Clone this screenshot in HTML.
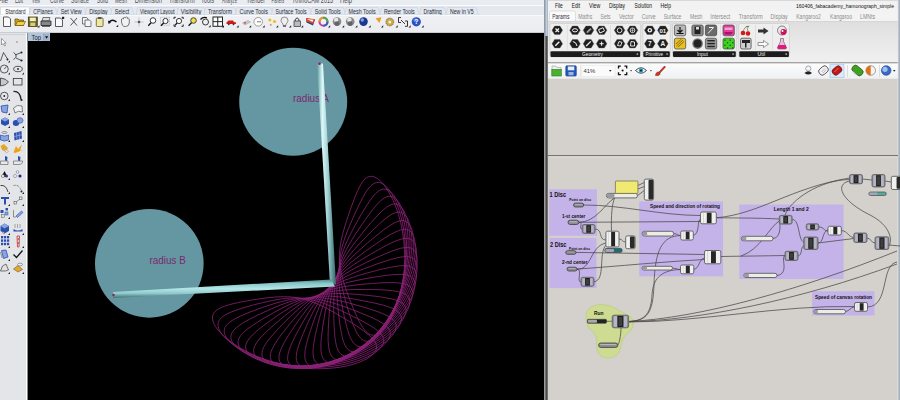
<!DOCTYPE html><html><head><meta charset="utf-8"><style>
html,body{margin:0;padding:0;width:900px;height:400px;overflow:hidden;background:#000}
svg{display:block}
text{font-family:"Liberation Sans",sans-serif}
</style></head><body>
<svg width="900" height="400" viewBox="0 0 900 400">
<defs>
<linearGradient id="rodV" x1="0" y1="0" x2="1" y2="0">
<stop offset="0" stop-color="#5a9a9e"/><stop offset="0.28" stop-color="#def8f8"/><stop offset="0.55" stop-color="#a4d4d6"/><stop offset="0.82" stop-color="#5e9296"/><stop offset="1" stop-color="#3c666a"/></linearGradient>
<linearGradient id="rodH" x1="0" y1="0" x2="0" y2="1">
<stop offset="0" stop-color="#4e8a8f"/><stop offset="0.2" stop-color="#86c4c6"/><stop offset="0.5" stop-color="#b4e6e6"/><stop offset="0.75" stop-color="#90cacc"/><stop offset="1" stop-color="#406f74"/></linearGradient>
<linearGradient id="rhTb" x1="0" y1="0" x2="0" y2="1"><stop offset="0" stop-color="#f5f5f8"/><stop offset="1" stop-color="#ebecf0"/></linearGradient>
<linearGradient id="ghRib" x1="0" y1="0" x2="0" y2="1"><stop offset="0" stop-color="#dedede"/><stop offset="0.5" stop-color="#e8e8e8"/><stop offset="1" stop-color="#f0f0f0"/></linearGradient>
<linearGradient id="ghTb" x1="0" y1="0" x2="0" y2="1"><stop offset="0" stop-color="#fcfcfc"/><stop offset="1" stop-color="#eef0f3"/></linearGradient>
<linearGradient id="divB" x1="0" y1="0" x2="1" y2="0"><stop offset="0" stop-color="#8a9aac"/><stop offset="0.5" stop-color="#c4d2e0"/><stop offset="1" stop-color="#8a9aac"/></linearGradient>
</defs>

<rect x="0" y="0" width="544" height="33" fill="url(#rhTb)"/>
<rect x="0" y="0" width="544" height="5" fill="#e9ecf1"/>
<rect x="0" y="5" width="544" height="1" fill="#fafbfd"/>
<rect x="0" y="6" width="544" height="9" fill="#e4e8ef"/>
<g font-size="8.2" fill="#4e4e56">
<text x="-2" y="3.4" textLength="10.0" lengthAdjust="spacingAndGlyphs">File</text>
<text x="15" y="3.4" textLength="8.0" lengthAdjust="spacingAndGlyphs">Edit</text>
<text x="32" y="3.4" textLength="8.0" lengthAdjust="spacingAndGlyphs">View</text>
<text x="50" y="3.4" textLength="14.0" lengthAdjust="spacingAndGlyphs">Curve</text>
<text x="71" y="3.4" textLength="18.0" lengthAdjust="spacingAndGlyphs">Surface</text>
<text x="97" y="3.4" textLength="11.0" lengthAdjust="spacingAndGlyphs">Solid</text>
<text x="115" y="3.4" textLength="12.0" lengthAdjust="spacingAndGlyphs">Mesh</text>
<text x="134.7" y="3.4" textLength="27.3" lengthAdjust="spacingAndGlyphs">Dimension</text>
<text x="169" y="3.4" textLength="25.7" lengthAdjust="spacingAndGlyphs">Transform</text>
<text x="201" y="3.4" textLength="13.0" lengthAdjust="spacingAndGlyphs">Tools</text>
<text x="222" y="3.4" textLength="15.0" lengthAdjust="spacingAndGlyphs">Analyze</text>
<text x="247.5" y="3.4" textLength="17.5" lengthAdjust="spacingAndGlyphs">Render</text>
<text x="271.5" y="3.4" textLength="12.5" lengthAdjust="spacingAndGlyphs">Panels</text>
<text x="293" y="3.4" textLength="40.0" lengthAdjust="spacingAndGlyphs">RhinoCAM 2015</text>
<text x="340" y="3.4" textLength="12.0" lengthAdjust="spacingAndGlyphs">Help</text>
</g>
<path d="M0.5 15 L0.5 8 Q0.5 7 1.5 7 L28.5 7 Q29.5 7 29.5 8 L29.5 15 Z" fill="#fdfdfe" stroke="#c9ced8" stroke-width="0.6"/>
<path d="M29.299999999999997 15 L30.799999999999997 7.5 L55.3 7.5 L57.8 15 Z" fill="#e2e7f0" stroke="#c3c9d6" stroke-width="0.5"/>
<path d="M56.7 15 L58.2 7.5 L84.2 7.5 L86.7 15 Z" fill="#e2e7f0" stroke="#c3c9d6" stroke-width="0.5"/>
<path d="M85.2 15 L86.7 7.5 L110.1 7.5 L112.6 15 Z" fill="#e2e7f0" stroke="#c3c9d6" stroke-width="0.5"/>
<path d="M110.7 15 L112.2 7.5 L131.7 7.5 L134.2 15 Z" fill="#e2e7f0" stroke="#c3c9d6" stroke-width="0.5"/>
<path d="M136 15 L137.5 7.5 L177.2 7.5 L179.7 15 Z" fill="#e2e7f0" stroke="#c3c9d6" stroke-width="0.5"/>
<path d="M176.8 15 L178.3 7.5 L203.8 7.5 L206.3 15 Z" fill="#e2e7f0" stroke="#c3c9d6" stroke-width="0.5"/>
<path d="M204 15 L205.5 7.5 L234.5 7.5 L237 15 Z" fill="#e2e7f0" stroke="#c3c9d6" stroke-width="0.5"/>
<path d="M235.5 15 L237.0 7.5 L270.5 7.5 L273 15 Z" fill="#e2e7f0" stroke="#c3c9d6" stroke-width="0.5"/>
<path d="M271.5 15 L273.0 7.5 L309.2 7.5 L311.7 15 Z" fill="#e2e7f0" stroke="#c3c9d6" stroke-width="0.5"/>
<path d="M310.7 15 L312.2 7.5 L343.3 7.5 L345.8 15 Z" fill="#e2e7f0" stroke="#c3c9d6" stroke-width="0.5"/>
<path d="M344.6 15 L346.1 7.5 L378.1 7.5 L380.6 15 Z" fill="#e2e7f0" stroke="#c3c9d6" stroke-width="0.5"/>
<path d="M379.9 15 L381.4 7.5 L417.2 7.5 L419.7 15 Z" fill="#e2e7f0" stroke="#c3c9d6" stroke-width="0.5"/>
<path d="M419.6 15 L421.1 7.5 L444.2 7.5 L446.7 15 Z" fill="#e2e7f0" stroke="#c3c9d6" stroke-width="0.5"/>
<path d="M446 15 L447.5 7.5 L476.1 7.5 L478.6 15 Z" fill="#e2e7f0" stroke="#c3c9d6" stroke-width="0.5"/>
<g font-size="6.4" fill="#2a2e38">
<text x="5.2" y="13.5" textLength="20.3" lengthAdjust="spacingAndGlyphs">Standard</text>
<text x="33.3" y="13.5" textLength="19.5" lengthAdjust="spacingAndGlyphs">CPlanes</text>
<text x="60.7" y="13.5" textLength="21.0" lengthAdjust="spacingAndGlyphs">Set View</text>
<text x="89.2" y="13.5" textLength="18.4" lengthAdjust="spacingAndGlyphs">Display</text>
<text x="114.7" y="13.5" textLength="14.5" lengthAdjust="spacingAndGlyphs">Select</text>
<text x="140" y="13.5" textLength="34.7" lengthAdjust="spacingAndGlyphs">Viewport Layout</text>
<text x="180.8" y="13.5" textLength="20.5" lengthAdjust="spacingAndGlyphs">Visibility</text>
<text x="208" y="13.5" textLength="24.0" lengthAdjust="spacingAndGlyphs">Transform</text>
<text x="239.5" y="13.5" textLength="28.5" lengthAdjust="spacingAndGlyphs">Curve Tools</text>
<text x="275.5" y="13.5" textLength="31.2" lengthAdjust="spacingAndGlyphs">Surface Tools</text>
<text x="314.7" y="13.5" textLength="26.1" lengthAdjust="spacingAndGlyphs">Solid Tools</text>
<text x="348.6" y="13.5" textLength="27.0" lengthAdjust="spacingAndGlyphs">Mesh Tools</text>
<text x="383.9" y="13.5" textLength="30.8" lengthAdjust="spacingAndGlyphs">Render Tools</text>
<text x="423.6" y="13.5" textLength="18.1" lengthAdjust="spacingAndGlyphs">Drafting</text>
<text x="450" y="13.5" textLength="23.6" lengthAdjust="spacingAndGlyphs">New in V5</text>
</g>
<rect x="0" y="15" width="544" height="1" fill="#f8f9fb"/>
<path d="M3.5 17 L8.5 17 L10.5 19 L10.5 26.5 L3.5 26.5 Z" fill="#fafafa" stroke="#333" stroke-width="0.8"/>
<path d="M15 19 L18 19 L19 20 L23.5 20 L23.5 25.5 L15 25.5 Z" fill="#c8a020" stroke="#5a4a10" stroke-width="0.7"/>
<path d="M15.5 25.5 L17.5 21.5 L25.5 21.5 L23.5 25.5 Z" fill="#f0d040" stroke="#5a4a10" stroke-width="0.6"/>
<rect x="28.3" y="17" width="9" height="9.5" fill="#6a6420" stroke="#3a3410" stroke-width="0.7"/>
<rect x="29.8" y="17.6" width="6" height="3.6" fill="#f4f0c0"/>
<rect x="30.3" y="22.6" width="5" height="3.4" fill="#d8d080"/>
<path d="M37.3 27.5 L39.5 27.5 L39.5 25.3 Z" fill="#222"/>
<path d="M43 17.5 L50 17.5 L49 21 L42 21 Z" fill="#ddd" stroke="#444" stroke-width="0.7"/>
<path d="M41 21 L51 21 L51 25.5 L41 25.5 Z" fill="#888" stroke="#222" stroke-width="0.8"/>
<rect x="42" y="25.5" width="8" height="1.2" fill="#333"/>
<path d="M55.5 18 L60.5 18 L62.5 20 L62.5 26.5 L55.5 26.5 Z" fill="#fafafa" stroke="#333" stroke-width="0.8"/>
<rect x="62" y="16.8" width="2.2" height="2.2" fill="#222"/>
<path d="M70.5 18 L77 25.5 M77 18 L70.5 25.5" stroke="#555" stroke-width="1"/>
<path d="M82.5 17.5 L86.5 17.5 L88 19 L88 24 L82.5 24 Z" fill="#f4f4f4" stroke="#444" stroke-width="0.7"/>
<path d="M85 20 L89.5 20 L91 21.5 L91 26.5 L85 26.5 Z" fill="#f4f4f4" stroke="#444" stroke-width="0.7"/>
<rect x="96.3" y="18" width="6.8" height="8.5" rx="0.8" fill="#f0e8a0" stroke="#4a4420" stroke-width="0.7"/>
<rect x="98" y="17" width="3.5" height="2" fill="#555"/>
<path d="M109 22 Q112.5 18.5 116.5 22" fill="none" stroke="#111" stroke-width="1.4"/>
<path d="M108 20.5 L111 22.5 L108.5 24 Z" fill="#111"/>
<path d="M116 27 L118.2 27 L118.2 24.8 Z" fill="#222"/>
<path d="M121.5 22 L121.5 19 Q122.5 18 123.5 19 L123.5 17.8 Q124.5 16.8 125.5 17.8 L125.5 17.5 Q126.5 16.5 127.5 17.5 L127.5 18.5 Q128.8 18 129.3 19 L129.3 23 Q129 26.5 125.5 26.5 L124 26.5 Q122 26 121.5 22 Z" fill="#f2f2f2" stroke="#555" stroke-width="0.8"/>
<path d="M139 17.5 L139 26.5 M134.5 22 L143.5 22" stroke="#bbb" stroke-width="0.9"/>
<circle cx="139" cy="22" r="1.3" fill="#555"/>
<circle cx="153" cy="20.5" r="2.8" fill="#fff" stroke="#222" stroke-width="0.9"/>
<path d="M151 22.8 L148.3 25.8" stroke="#111" stroke-width="1.3"/>
<rect x="160.5" y="17.3" width="9" height="8" fill="none" stroke="#999" stroke-width="0.6" stroke-dasharray="1 0.8"/>
<circle cx="165.5" cy="21" r="2.6" fill="#fff" stroke="#222" stroke-width="0.9"/>
<path d="M163.6 23 L161 25.8" stroke="#111" stroke-width="1.3"/>
<path d="M174 19 L174 17.3 L175.8 17.3 M181.5 17.3 L183.2 17.3 L183.2 19 M183.2 24.5 L183.2 26.3 L181.5 26.3 M175.8 26.3 L174 26.3 L174 24.5" fill="none" stroke="#222" stroke-width="1"/>
<circle cx="179" cy="21" r="2.6" fill="#fff" stroke="#222" stroke-width="0.9"/>
<path d="M177 23 L175 25.3" stroke="#111" stroke-width="1.2"/>
<circle cx="193.5" cy="20.5" r="2.8" fill="#f0e040" stroke="#333" stroke-width="0.9"/>
<path d="M191.5 22.8 L188.6 25.8" stroke="#111" stroke-width="1.3"/>
<circle cx="205.5" cy="22" r="3" fill="none" stroke="#222" stroke-width="0.9"/>
<path d="M200.5 19.5 Q203 16.5 207 17.8" fill="none" stroke="#111" stroke-width="1.3"/>
<path d="M208.5 27.3 L210.7 27.3 L210.7 25.1 Z" fill="#222"/>
<rect x="213" y="17" width="9.5" height="9.3" fill="#fff" stroke="#222" stroke-width="1"/>
<path d="M217.75 17 L217.75 26.3 M213 21.65 L222.5 21.65" stroke="#222" stroke-width="1"/>
<path d="M221.8 27.5 L224.0 27.5 L224.0 25.3 Z" fill="#222"/>
<path d="M226.5 22.5 L228.5 20.5 L233 20.5 L234 22 L236 22.5 L236 24 L226.5 24 Z" fill="#d21a1a"/>
<circle cx="228.8" cy="24.3" r="0.9" fill="#333"/><circle cx="233.5" cy="24.3" r="0.9" fill="#333"/>
<path d="M236.5 27.5 L238.7 27.5 L238.7 25.3 Z" fill="#222"/>
<path d="M242.5 23 L248 20.5 L250.5 22 L245 25 Z" fill="#ccc" stroke="#999" stroke-width="0.5"/>
<circle cx="245" cy="22.8" r="0.9" fill="#c33"/>
<path d="M249 27.5 L251.2 27.5 L251.2 25.3 Z" fill="#222"/>
<circle cx="258.2" cy="21.8" r="4.3" fill="#fff" stroke="#888" stroke-width="0.8"/>
<path d="M257 21.8 L261 21.8" stroke="#555" stroke-width="0.8"/>
<path d="M262.5 27.5 L264.7 27.5 L264.7 25.3 Z" fill="#222"/>
<circle cx="269.8" cy="20" r="1.5" fill="#e8c020"/><circle cx="274.5" cy="21.5" r="1.6" fill="#e8c020"/><circle cx="270.8" cy="24.8" r="1.1" fill="#d9a080"/>
<path d="M276 27.5 L278.2 27.5 L278.2 25.3 Z" fill="#222"/>
<path d="M284.5 17 Q288 17 288 20.5 Q288 22.5 286 24 L286 25.5 L283 25.5 L283 24 Q281 22.5 281 20.5 Q281 17 284.5 17 Z" fill="#eee" stroke="#666" stroke-width="0.7"/>
<rect x="283" y="25.5" width="3" height="1.3" fill="#555"/>
<path d="M289 27.5 L291.2 27.5 L291.2 25.3 Z" fill="#222"/>
<path d="M295.3 21 L295.3 19.3 Q297.1 16.5 298.9 19.3 L298.9 21" fill="none" stroke="#222" stroke-width="0.9"/>
<rect x="294" y="21" width="6.5" height="5.5" fill="#bbb" stroke="#333" stroke-width="0.7"/>
<path d="M301 27.5 L303.2 27.5 L303.2 25.3 Z" fill="#222"/>
<path d="M306 18.5 L315 19.5 L313 25.5 L306.5 22.5 Z" fill="#1d3f9a"/>
<path d="M306 18 L315 19.2 L313.2 24 L306.3 21.2 Z" fill="#e04818"/>
<path d="M306.8 19 L313.5 19.8 L312.5 22 Z" fill="#f4f4f4"/>
<circle cx="323.5" cy="21.8" r="4" fill="none" stroke="#c040a0" stroke-width="2"/>
<path d="M319.5 21.8 A4 4 0 0 1 323.5 17.8" fill="none" stroke="#e0a020" stroke-width="2"/>
<path d="M323.5 17.8 A4 4 0 0 1 327.5 21.8" fill="none" stroke="#40b040" stroke-width="2"/>
<path d="M327.5 21.8 A4 4 0 0 1 323.5 25.8" fill="none" stroke="#3060c0" stroke-width="2"/>
<path d="M328 27.5 L330.2 27.5 L330.2 25.3 Z" fill="#222"/>
<circle cx="337" cy="21.6" r="4.3" fill="#8a8a8a"/><circle cx="336.2" cy="20" r="2.2" fill="#e8e8e8"/><circle cx="337" cy="23.5" r="2.4" fill="#444" opacity="0.55"/>
<path d="M342 27.5 L344.2 27.5 L344.2 25.3 Z" fill="#222"/>
<circle cx="350.2" cy="21.6" r="4.3" fill="#8a8a8a"/><circle cx="349.4" cy="20" r="2.2" fill="#e8e8e8"/><circle cx="350.2" cy="23.5" r="2.4" fill="#444" opacity="0.55"/>
<path d="M355.2 27.5 L357.4 27.5 L357.4 25.3 Z" fill="#222"/>
<circle cx="363.5" cy="21.6" r="4.3" fill="#1a3890"/><circle cx="362.3" cy="20" r="1.8" fill="#7ea0e0"/>
<path d="M368.5 27.5 L370.7 27.5 L370.7 25.3 Z" fill="#222"/>
<path d="M375.5 18.2 L381.5 17.3 L379.5 23 Z" fill="#e8a020"/>
<path d="M381 27.5 L383.2 27.5 L383.2 25.3 Z" fill="#222"/>
<circle cx="389.8" cy="22" r="4" fill="#c8a840" stroke="#555" stroke-width="0.6" stroke-dasharray="1.2 0.8"/>
<circle cx="389.8" cy="22" r="1.5" fill="#f0f0f0"/>
<path d="M395.5 27.5 L397.7 27.5 L397.7 25.3 Z" fill="#222"/>
<path d="M401 17.5 L398.5 17.5 L398.5 22.5 L401 22.5 M405 21 L407.5 21 L407.5 26.3 L405 26.3 M401 20 L405 24" fill="none" stroke="#222" stroke-width="0.9"/>
<path d="M408.5 27.5 L410.7 27.5 L410.7 25.3 Z" fill="#222"/>
<circle cx="416.3" cy="21.8" r="4.6" fill="#2a52c0"/><circle cx="415.3" cy="20.3" r="2" fill="#6a90e8" opacity="0.7"/>
<text x="414.3" y="24.3" font-size="7" font-weight="bold" fill="#fff">?</text>
<path d="M421.5 27.5 L423.7 27.5 L423.7 25.3 Z" fill="#222"/>
<rect x="0" y="32" width="544" height="1" fill="#c8ccd4"/>
<rect x="0" y="33" width="26" height="367" fill="#e4e5e9"/>
<path d="M1.5 38.5 L1.5 45 L3 43.5 L4.5 46 L5.5 45.5 L4.3 43 L6.2 43 Z" fill="#fff" stroke="#666" stroke-width="0.6"/>
<circle cx="17" cy="42" r="1" fill="#aaa"/>
<path d="M0.5 61 L3.5 52.5 L7.5 59" fill="none" stroke="#333" stroke-width="0.8"/>
<circle cx="7.5" cy="59.5" r="1" fill="#222"/><path d="M8 62.5 L10 62.5 L10 60.5 Z" fill="#222"/>
<path d="M13.5 52.5 Q19 56 13.5 59.5 M15 55 L21.5 52.5 M16 58 L21.5 60.5" fill="none" stroke="#333" stroke-width="0.8"/>
<circle cx="21.5" cy="52.5" r="1" fill="#222"/><circle cx="21.5" cy="60.5" r="1.1" fill="#222"/>
<circle cx="4.3" cy="69" r="4" fill="none" stroke="#333" stroke-width="0.8"/><path d="M4.3 69 L6.5 66.5" stroke="#333" stroke-width="0.8"/><path d="M8 74.5 L10 74.5 L10 72.5 Z" fill="#222"/>
<ellipse cx="18" cy="69" rx="4.3" ry="2.7" fill="none" stroke="#333" stroke-width="0.8"/><circle cx="18" cy="69" r="0.9" fill="#222"/><path d="M22 74.5 L24 74.5 L24 72.5 Z" fill="#222"/>
<path d="M0.5 78 Q6 78.5 8.5 82 Q6 85.5 0.5 86 Z" fill="#c8c8c8" stroke="#333" stroke-width="0.8"/>
<rect x="13.3" y="78.5" width="8.7" height="6.5" fill="none" stroke="#333" stroke-width="0.8"/>
<circle cx="4.3" cy="96" r="3.8" fill="none" stroke="#333" stroke-width="0.8"/><circle cx="4.3" cy="96" r="0.9" fill="#222"/><path d="M8 101 L10 101 L10 99 Z" fill="#222"/>
<path d="M13.5 91.5 Q20 91 21 99.5" fill="none" stroke="#222" stroke-width="1.3"/><circle cx="21.5" cy="100" r="1.1" fill="#222"/>
<path d="M1 106 L8 105 L7 113 L2 112 Z" fill="#8aa4e0" stroke="#2a4fb0" stroke-width="0.8"/><path d="M8 115 L10 115 L10 113 Z" fill="#222"/>
<path d="M13.5 108 Q17 104 22 106 L22.5 112 Q18 110 15 113 Z" fill="#f0f0f0" stroke="#555" stroke-width="0.7"/><path d="M22 115 L24 115 L24 113 Z" fill="#222"/>
<path d="M1 119.5 L5 117.5 L9 119.5 L9 124 L5 126 L1 124 Z" fill="#2a4fb0"/><path d="M1 119.5 L5 117.5 L9 119.5 L5 121.5 Z" fill="#8aa4e0"/><path d="M8 128 L10 128 L10 126 Z" fill="#222"/>
<ellipse cx="16" cy="123" rx="3.2" ry="3" fill="#2a4fb0"/><ellipse cx="20" cy="120.5" rx="3" ry="2.8" fill="#8aa4e0" stroke="#2a4fb0" stroke-width="0.6"/><path d="M22 128 L24 128 L24 126 Z" fill="#222"/>
<ellipse cx="4.5" cy="132.5" rx="2.5" ry="1" fill="none" stroke="#555" stroke-width="0.6"/><path d="M0.5 135 Q4.5 137 8.5 135 L8.5 140 Q4.5 142 0.5 140 Z" fill="#8aa4e0" stroke="#2a4fb0" stroke-width="0.7"/><path d="M8 142 L10 142 L10 140 Z" fill="#222"/>
<path d="M14 133 L21.5 131 L22 138.5 L14.5 140.5 Z" fill="#2a4fb0"/><path d="M16.5 132.3 L17 139.8 M19 131.6 L19.5 139.2 M14.2 136.5 L21.8 134.8" stroke="#c0d0f0" stroke-width="0.5"/><path d="M22 142 L24 142 L24 140 Z" fill="#222"/>
<path d="M0.5 146 L4 144 L8 148 L6 152 L2 150 Z" fill="#e8a820"/><path d="M3.5 148 L8.5 151.5 L6.5 153 Z" fill="#f4f4f4" stroke="#888" stroke-width="0.5"/>
<path d="M13.5 152.5 L16 146 L18 149 L22 144.5 L20 150.5 L23 150 L15 153 Z" fill="#f0a010"/>
<path d="M5 156 L7.5 157 L7 161 L5 160.5 Z" fill="#2a4fb0"/><path d="M0.5 161 L8 161 L8 164.5 L0.5 164.5 Z" fill="#e8e8e8" stroke="#555" stroke-width="0.6"/>
<path d="M18 156 L20.5 157 L20 161 L18 160.5 Z" fill="#2a4fb0"/><path d="M13.5 161 L22.5 161 Q23 164.5 18 164.5 L13.5 164.5 Z" fill="#e8e8e8" stroke="#555" stroke-width="0.6"/>
<path d="M1.5 177 L4.5 171 L7.5 177 Z" fill="#111"/><circle cx="3" cy="176" r="1.5" fill="#fff" stroke="#333" stroke-width="0.5"/><circle cx="6.5" cy="176" r="1.5" fill="#2a3aa0"/><path d="M8 180 L10 180 L10 178 Z" fill="#222"/>
<circle cx="17.5" cy="172" r="1.3" fill="#fff" stroke="#555" stroke-width="0.5"/><circle cx="15" cy="176" r="1.5" fill="#fff" stroke="#555" stroke-width="0.5"/><circle cx="20" cy="176" r="1.6" fill="#1a2a90"/>
<path d="M0.5 185.5 Q6 184.5 8 192" fill="none" stroke="#333" stroke-width="0.9"/><path d="M8 194 L10 194 L10 192 Z" fill="#222"/>
<path d="M13.5 185.5 Q19 184 21.5 191" fill="none" stroke="#555" stroke-width="0.9" stroke-dasharray="1 0.8"/><circle cx="21.5" cy="191.5" r="1" fill="#222"/><path d="M22 194 L24 194 L24 192 Z" fill="#222"/>
<path d="M1 197 L9 197 L9 199 L6 199 L6 204.5 L4 204.5 L4 199 L1 199 Z" fill="#2a4fb0"/><path d="M8 206 L10 206 L10 204 Z" fill="#222"/>
<rect x="14" y="201.5" width="2.5" height="2.5" fill="#eee" stroke="#555" stroke-width="0.6"/><rect x="19.5" y="197" width="2.5" height="2.5" fill="#eee" stroke="#555" stroke-width="0.6"/><path d="M16.5 201.5 L19.5 199.5" stroke="#555" stroke-width="0.6"/><path d="M22 206 L24 206 L24 204 Z" fill="#222"/>
<rect x="0.5" y="210" width="3" height="3" fill="#2a4fb0"/><rect x="5" y="212" width="3" height="3" fill="#8aa4e0" stroke="#2a4fb0" stroke-width="0.5"/><rect x="1.5" y="214.5" width="3" height="3" fill="#ddd" stroke="#555" stroke-width="0.5"/><rect x="5.5" y="208" width="2.5" height="2.5" fill="#2a4fb0"/><path d="M8 219 L10 219 L10 217 Z" fill="#222"/>
<path d="M13.5 210 L13.5 217 L16 217" fill="none" stroke="#777" stroke-width="0.8"/><path d="M16 216 L21.5 211 L23 212.5 L17.5 217.5 Z" fill="#8aa4e0" stroke="#2a4fb0" stroke-width="0.6"/>
<path d="M0.5 226 L4.5 223.5 L9 226 L9 231 L4.5 233.5 L0.5 231 Z" fill="#2a4fb0"/><path d="M0.5 226 L4.5 223.5 L9 226 L4.5 228.5 Z" fill="#8aa4e0"/><path d="M2 231 L5 233 L3.5 234 Z" fill="#fff" stroke="#333" stroke-width="0.4"/><path d="M8 235 L10 235 L10 233 Z" fill="#222"/>
<path d="M15 228 L15 224 M17.5 228 L17.5 224 M20 228 L20 224" stroke="#888" stroke-width="0.7"/><path d="M13.5 229 Q18 232 22.5 229 L22.5 231.5 L13.5 231.5 Z" fill="#2a4fb0"/><path d="M22 235 L24 235 L24 233 Z" fill="#222"/>
<g fill="#2a4fb0"><rect x="1" y="236.0" width="2.2" height="2.4"/><rect x="1" y="239.4" width="2.2" height="2.4"/><rect x="1" y="242.8" width="2.2" height="2.4"/><rect x="4" y="236.0" width="2.2" height="2.4"/><rect x="4" y="239.4" width="2.2" height="2.4"/><rect x="4" y="242.8" width="2.2" height="2.4"/><rect x="7" y="236.0" width="2.2" height="2.4"/><rect x="7" y="239.4" width="2.2" height="2.4"/><rect x="7" y="242.8" width="2.2" height="2.4"/></g><path d="M8 248 L10 248 L10 246 Z" fill="#222"/>
<path d="M17 236 L19.5 236 L19 247 L17.5 247 Z" fill="#e8e8e8" stroke="#c03030" stroke-width="0.8"/><circle cx="18.3" cy="239" r="0.8" fill="#c03030"/><circle cx="18.3" cy="243" r="0.8" fill="#c03030"/><path d="M22 248 L24 248 L24 246 Z" fill="#222"/>
<path d="M1.5 250.5 L6 250 L8 257 L3.5 258.5 Z" fill="#8aa4e0" stroke="#2a4fb0" stroke-width="0.8"/><path d="M0.5 252 L2 258" stroke="#555" stroke-width="0.6"/><path d="M8 261 L10 261 L10 259 Z" fill="#222"/>
<path d="M13.5 254.5 L16.5 257.5 L22.5 250.5" fill="none" stroke="#111" stroke-width="1.3"/>
<path d="M0.5 271 L2.5 266 L6 264 L8.5 270 L5.5 271 Z" fill="#e0e0e0" stroke="#444" stroke-width="0.7"/><path d="M8 274 L10 274 L10 272 Z" fill="#222"/>
<path d="M13.5 269 L18 265.5 L22.5 269.5 L18 272 Z" fill="#e8a820" stroke="#444" stroke-width="0.5"/><ellipse cx="20" cy="264.5" rx="2.5" ry="1.3" fill="#eee" stroke="#555" stroke-width="0.5"/><path d="M22 274 L24 274 L24 272 Z" fill="#222"/>
<rect x="26" y="33" width="1" height="367" fill="#ffffff"/>
<rect x="27" y="33" width="1" height="367" fill="#8a8a8a"/>
<rect x="28" y="33" width="22" height="8.2" fill="#b2c6da"/>
<rect x="43.8" y="33.6" width="5.6" height="7" fill="#9fb3c9"/>
<rect x="43.6" y="33.6" width="0.5" height="7" fill="#7a8ea6"/>
<text x="31.5" y="39.6" font-size="6.5" fill="#1a2230" textLength="9.5" lengthAdjust="spacingAndGlyphs">Top</text>
<path d="M45 36.3 L48.2 36.3 L46.6 38.8 Z" fill="#111"/>
<rect x="0" y="34" width="25" height="0.8" fill="#c8cad0"/>
<rect x="544" y="0" width="4.5" height="400" fill="#4a4a4a"/>
<rect x="544" y="0" width="1.5" height="400" fill="#9a9a9a"/>
<rect x="547.6" y="0" width="0.9" height="400" fill="#b0b0b0"/>
<rect x="544.5" y="0" width="4.3" height="36" fill="url(#divB)"/>
<rect x="548" y="0" width="352" height="400" fill="#d4d1cc"/>
<rect x="548" y="0" width="352" height="11" fill="#f2f2f2"/>
<rect x="548" y="0" width="352" height="1" fill="#d8d8d8"/>
<g font-size="6.4" fill="#111">
<text x="555" y="7.6" textLength="7.8" lengthAdjust="spacingAndGlyphs">File</text>
<text x="571.7" y="7.6" textLength="8.3" lengthAdjust="spacingAndGlyphs">Edit</text>
<text x="589" y="7.6" textLength="11.3" lengthAdjust="spacingAndGlyphs">View</text>
<text x="609" y="7.6" textLength="16.0" lengthAdjust="spacingAndGlyphs">Display</text>
<text x="634.4" y="7.6" textLength="17.6" lengthAdjust="spacingAndGlyphs">Solution</text>
<text x="660.6" y="7.6" textLength="10.4" lengthAdjust="spacingAndGlyphs">Help</text>
</g>
<text x="796" y="7.6" font-size="6.2" fill="#111" textLength="98" lengthAdjust="spacingAndGlyphs">160406_fabacademy_hamonograph_simple</text>
<rect x="548" y="11" width="352" height="10" fill="#f3f3f3"/>
<path d="M549.5 22 L549.5 12.5 Q549.5 11 551 11 L574 11 Q575.5 11 575.5 12.5 L575.5 22 Z" fill="#fafafa" stroke="#cfcfcf" stroke-width="0.6"/>
<text x="552.2" y="18.8" font-size="6.6" fill="#3a2a4a" textLength="17.2" lengthAdjust="spacingAndGlyphs">Params</text>
<text x="578.3" y="18.8" font-size="6.6" fill="#8c8c8c" textLength="13.9" lengthAdjust="spacingAndGlyphs">Maths</text>
<text x="600.6" y="18.8" font-size="6.6" fill="#8c8c8c" textLength="10.0" lengthAdjust="spacingAndGlyphs">Sets</text>
<text x="618.9" y="18.8" font-size="6.6" fill="#8c8c8c" textLength="15.0" lengthAdjust="spacingAndGlyphs">Vector</text>
<text x="641.7" y="18.8" font-size="6.6" fill="#8c8c8c" textLength="14.0" lengthAdjust="spacingAndGlyphs">Curve</text>
<text x="663.7" y="18.8" font-size="6.6" fill="#8c8c8c" textLength="17.6" lengthAdjust="spacingAndGlyphs">Surface</text>
<text x="690" y="18.8" font-size="6.6" fill="#8c8c8c" textLength="12.4" lengthAdjust="spacingAndGlyphs">Mesh</text>
<text x="710.2" y="18.8" font-size="6.6" fill="#8c8c8c" textLength="20.0" lengthAdjust="spacingAndGlyphs">Intersect</text>
<text x="738.8" y="18.8" font-size="6.6" fill="#8c8c8c" textLength="24.0" lengthAdjust="spacingAndGlyphs">Transform</text>
<text x="770.6" y="18.8" font-size="6.6" fill="#8c8c8c" textLength="17.1" lengthAdjust="spacingAndGlyphs">Display</text>
<text x="796.3" y="18.8" font-size="6.6" fill="#8c8c8c" textLength="24.4" lengthAdjust="spacingAndGlyphs">Kangaroo2</text>
<text x="830" y="18.8" font-size="6.6" fill="#8c8c8c" textLength="22.0" lengthAdjust="spacingAndGlyphs">Kangaroo</text>
<text x="860" y="18.8" font-size="6.6" fill="#8c8c8c" textLength="15.0" lengthAdjust="spacingAndGlyphs">LMNts</text>
<rect x="548" y="21" width="352" height="41" fill="url(#ghRib)"/>
<rect x="548" y="21" width="352" height="0.8" fill="#d4d4d4"/>
<rect x="548" y="62" width="352" height="1.5" fill="#a4a4a4"/>
<rect x="550" y="23.5" width="90.60000000000002" height="33.5" rx="1.5" fill="#eeeeee" stroke="#c8c8c8" stroke-width="0.6"/>
<rect x="550.5" y="51.3" width="89.60000000000002" height="5.6" rx="1" fill="#1c1c1c"/>
<text x="592.5" y="55.7" font-size="5.2" fill="#f0f0f0" text-anchor="middle" textLength="21" lengthAdjust="spacingAndGlyphs">Geometry</text>
<path d="M636.4 54.1 L638.4 54.1 M637.4 53.1 L637.4 55.1" stroke="#ccc" stroke-width="0.6"/>
<rect x="642.8" y="23.5" width="27.5" height="33.5" rx="1.5" fill="#eeeeee" stroke="#c8c8c8" stroke-width="0.6"/>
<rect x="643.3" y="51.3" width="26.5" height="5.6" rx="1" fill="#1c1c1c"/>
<text x="654.3" y="55.7" font-size="5.2" fill="#f0f0f0" text-anchor="middle" textLength="17.5" lengthAdjust="spacingAndGlyphs">Primitive</text>
<path d="M666.0999999999999 54.1 L668.0999999999999 54.1 M667.0999999999999 53.1 L667.0999999999999 55.1" stroke="#ccc" stroke-width="0.6"/>
<rect x="672.5" y="23.5" width="63.799999999999955" height="33.5" rx="1.5" fill="#eeeeee" stroke="#c8c8c8" stroke-width="0.6"/>
<rect x="673.0" y="51.3" width="62.799999999999955" height="5.6" rx="1" fill="#1c1c1c"/>
<text x="702.5" y="55.7" font-size="5.2" fill="#f0f0f0" text-anchor="middle" textLength="11" lengthAdjust="spacingAndGlyphs">Input</text>
<path d="M732.0999999999999 54.1 L734.0999999999999 54.1 M733.0999999999999 53.1 L733.0999999999999 55.1" stroke="#ccc" stroke-width="0.6"/>
<rect x="738.8" y="23.5" width="50.60000000000002" height="33.5" rx="1.5" fill="#eeeeee" stroke="#c8c8c8" stroke-width="0.6"/>
<rect x="739.3" y="51.3" width="49.60000000000002" height="5.6" rx="1" fill="#1c1c1c"/>
<text x="761.3" y="55.7" font-size="5.2" fill="#f0f0f0" text-anchor="middle" textLength="7.5" lengthAdjust="spacingAndGlyphs">Util</text>
<path d="M785.1999999999999 54.1 L787.1999999999999 54.1 M786.1999999999999 53.1 L786.1999999999999 55.1" stroke="#ccc" stroke-width="0.6"/>
<rect x="566.9" y="25" width="0.6" height="25" fill="#d6d6d6"/>
<rect x="610" y="25" width="0.6" height="25" fill="#d6d6d6"/>
<rect x="755" y="25" width="0.6" height="25" fill="#d6d6d6"/>
<rect x="772" y="25" width="0.6" height="25" fill="#d6d6d6"/>
<rect x="720" y="25" width="0.6" height="25" fill="#d6d6d6"/>
<polygon points="562.60,30.30 559.95,34.52 554.65,34.52 552.00,30.30 554.65,26.08 559.95,26.08" fill="#1e1e1e" stroke="#555" stroke-width="0.4"/>
<polygon points="562.60,43.70 559.95,47.92 554.65,47.92 552.00,43.70 554.65,39.48 559.95,39.48" fill="#1e1e1e" stroke="#555" stroke-width="0.4"/>
<polygon points="580.30,30.30 577.65,34.52 572.35,34.52 569.70,30.30 572.35,26.08 577.65,26.08" fill="#1e1e1e" stroke="#555" stroke-width="0.4"/>
<polygon points="580.30,43.70 577.65,47.92 572.35,47.92 569.70,43.70 572.35,39.48 577.65,39.48" fill="#1e1e1e" stroke="#555" stroke-width="0.4"/>
<polygon points="593.80,30.30 591.15,34.52 585.85,34.52 583.20,30.30 585.85,26.08 591.15,26.08" fill="#1e1e1e" stroke="#555" stroke-width="0.4"/>
<polygon points="593.80,43.70 591.15,47.92 585.85,47.92 583.20,43.70 585.85,39.48 591.15,39.48" fill="#1e1e1e" stroke="#555" stroke-width="0.4"/>
<polygon points="606.90,30.30 604.25,34.52 598.95,34.52 596.30,30.30 598.95,26.08 604.25,26.08" fill="#1e1e1e" stroke="#555" stroke-width="0.4"/>
<polygon points="606.90,43.70 604.25,47.92 598.95,47.92 596.30,43.70 598.95,39.48 604.25,39.48" fill="#1e1e1e" stroke="#555" stroke-width="0.4"/>
<polygon points="624.90,30.30 622.25,34.52 616.95,34.52 614.30,30.30 616.95,26.08 622.25,26.08" fill="#1e1e1e" stroke="#555" stroke-width="0.4"/>
<polygon points="624.90,43.70 622.25,47.92 616.95,47.92 614.30,43.70 616.95,39.48 622.25,39.48" fill="#1e1e1e" stroke="#555" stroke-width="0.4"/>
<polygon points="637.80,30.30 635.15,34.52 629.85,34.52 627.20,30.30 629.85,26.08 635.15,26.08" fill="#1e1e1e" stroke="#555" stroke-width="0.4"/>
<polygon points="637.80,43.70 635.15,47.92 629.85,47.92 627.20,43.70 629.85,39.48 635.15,39.48" fill="#1e1e1e" stroke="#555" stroke-width="0.4"/>
<polygon points="655.10,30.30 652.45,34.52 647.15,34.52 644.50,30.30 647.15,26.08 652.45,26.08" fill="#1e1e1e" stroke="#555" stroke-width="0.4"/>
<polygon points="655.10,43.70 652.45,47.92 647.15,47.92 644.50,43.70 647.15,39.48 652.45,39.48" fill="#1e1e1e" stroke="#555" stroke-width="0.4"/>
<polygon points="668.10,30.30 665.45,34.52 660.15,34.52 657.50,30.30 660.15,26.08 665.45,26.08" fill="#1e1e1e" stroke="#555" stroke-width="0.4"/>
<polygon points="668.10,43.70 665.45,47.92 660.15,47.92 657.50,43.70 660.15,39.48 665.45,39.48" fill="#1e1e1e" stroke="#555" stroke-width="0.4"/>
<path d="M555.5 28.5 L559 32 M559 28.5 L555.5 32" stroke="#f4f4f4" stroke-width="1.2"/>
<path d="M555.3 45.8 L559.3 41.8" stroke="#f4f4f4" stroke-width="1.4"/>
<ellipse cx="575" cy="30.3" rx="2.6" ry="1.6" fill="none" stroke="#f4f4f4" stroke-width="1"/>
<path d="M572.8 41.5 Q576.5 42 577 46" fill="none" stroke="#f4f4f4" stroke-width="1"/>
<path d="M586.5 32.3 L590.5 28.3 M587.3 33 L591.3 29" stroke="#f4f4f4" stroke-width="0.8"/>
<path d="M586.2 46 L590.8 41.4" stroke="#f4f4f4" stroke-width="1.2"/>
<rect x="599" y="28.5" width="5" height="3.6" rx="0.6" fill="none" stroke="#f4f4f4" stroke-width="0.9" transform="rotate(-25 601.5 30.3)"/>
<path d="M599.5 43.7 L603.7 43.7 M601.6 41.6 L601.6 45.8" stroke="#f4f4f4" stroke-width="1"/>
<circle cx="619.6" cy="30.3" r="2.4" fill="none" stroke="#f4f4f4" stroke-width="0.9"/>
<circle cx="632.5" cy="30.3" r="2.4" fill="none" stroke="#f4f4f4" stroke-width="0.8"/><path d="M630.1 30.3 L634.9 30.3 M632.5 27.9 L632.5 32.7" stroke="#f4f4f4" stroke-width="0.5"/>
<path d="M617.5 45.5 L619 41.5 L622 42.3 L620.5 46 Z" fill="none" stroke="#f4f4f4" stroke-width="0.9"/>
<path d="M630.5 46 L631 41.5 L634.5 42 L634.5 46 Z" fill="none" stroke="#f4f4f4" stroke-width="0.9"/>
<circle cx="649.8" cy="30.3" r="2.3" fill="#f4f4f4"/><circle cx="649.8" cy="30.3" r="1" fill="#1e1e1e"/>
<text x="662.8" y="32.5" font-size="6" font-weight="bold" fill="#f4f4f4" text-anchor="middle">01</text>
<text x="649.8" y="46" font-size="6.5" font-weight="bold" fill="#f4f4f4" text-anchor="middle">7</text>
<text x="662.8" y="46" font-size="6.5" font-weight="bold" fill="#f4f4f4" text-anchor="middle" font-family="Liberation Serif">A</text>
<rect x="674.4" y="25" width="11.3" height="10.8" rx="1.8" fill="#b8b8b8" stroke="#444" stroke-width="0.7"/><path d="M680 27 L680 32 M677.5 30 L680 32.5 L682.5 30" stroke="#111" stroke-width="1.2" fill="none"/><rect x="676.5" y="33" width="7" height="1" fill="#111"/>
<rect x="674.4" y="38.2" width="11.3" height="10.8" rx="1.8" fill="#e8c020" stroke="#444" stroke-width="0.7"/><path d="M676.5 46 L683 40 M678 47 L684 41.5 M676 44 L681.5 39" stroke="#7a5a10" stroke-width="0.8"/>
<rect x="691.9" y="25" width="11.3" height="10.8" rx="1.8" fill="#8a8a8a" stroke="#444" stroke-width="0.7"/><rect x="694.5" y="26.5" width="6" height="7.5" fill="#222"/><rect x="696" y="27" width="3" height="2.5" fill="#ddd"/>
<circle cx="697.6" cy="43.6" r="5.3" fill="#777"/><circle cx="697.6" cy="43.6" r="4" fill="#222"/>
<rect x="705.4" y="25" width="11.3" height="10.8" rx="1.8" fill="#6a6a6a" stroke="#444" stroke-width="0.7"/><path d="M708 33.5 L713.5 27.5 M709 27.5 L713.5 27.5" stroke="#f0f0f0" stroke-width="1"/>
<rect x="705.4" y="38.2" width="11.3" height="10.8" rx="1.8" fill="#9a9a9a" stroke="#444" stroke-width="0.7"/><rect x="707.3" y="40" width="7.5" height="1.4" fill="#222"/><rect x="707.3" y="42.9" width="7.5" height="1.4" fill="#222"/><rect x="707.3" y="45.8" width="7.5" height="1.4" fill="#222"/>
<rect x="723" y="25" width="11.3" height="10.8" rx="1.8" fill="#e0409a" stroke="#444" stroke-width="0.7"/><rect x="724.5" y="27.5" width="8" height="2.5" fill="#f4a0d0"/><path d="M724.5 32 L733 32 L731 34.5 L724.5 34.5 Z" fill="#b0106a"/>
<rect x="723" y="38.2" width="11.3" height="10.8" rx="1.8" fill="#40d020" stroke="#444" stroke-width="0.7"/>
<rect x="724.3" y="39.5" width="1.3" height="1.3" fill="#0a5a0a"/><rect x="724.3" y="44.7" width="1.3" height="1.3" fill="#0a5a0a"/><rect x="726.9" y="42.1" width="1.3" height="1.3" fill="#0a5a0a"/><rect x="726.9" y="47.3" width="1.3" height="1.3" fill="#0a5a0a"/><rect x="729.5" y="39.5" width="1.3" height="1.3" fill="#0a5a0a"/><rect x="729.5" y="44.7" width="1.3" height="1.3" fill="#0a5a0a"/><rect x="732.0999999999999" y="42.1" width="1.3" height="1.3" fill="#0a5a0a"/><rect x="732.0999999999999" y="47.3" width="1.3" height="1.3" fill="#0a5a0a"/>
<circle cx="743" cy="33" r="2.3" fill="#d81818"/><circle cx="748" cy="33.5" r="2.3" fill="#d81818"/><path d="M743 31 Q745 27 747 26 M748 31.5 Q747 28 747 26" fill="none" stroke="#555" stroke-width="0.6"/><path d="M746 26.5 L749.5 25.5 L748.5 27.5 Z" fill="#4a9a20"/>
<rect x="740.6" y="38.2" width="10.5" height="10.8" rx="1.5" fill="#d0d0d0" stroke="#333" stroke-width="0.7"/><path d="M742 40 L750 40 L750 43 L746.5 43 L746.5 47.5 L745 47.5 L745 43 L742 43 Z" fill="#222"/>
<path d="M758 29.5 L763.5 29.5 L763.5 27.5 L768.5 31 L763.5 34.5 L763.5 32.5 L758 32.5 Z" fill="#333"/>
<path d="M758 42.5 L763.5 42.5 L763.5 40.5 L768.5 44 L763.5 47.5 L763.5 45.5 L758 45.5 Z" fill="#fafafa" stroke="#555" stroke-width="0.6"/>
<circle cx="782" cy="30.5" r="4.5" fill="#e8e8e8" stroke="#555" stroke-width="0.7"/><circle cx="783.5" cy="32" r="3" fill="#d01060"/><circle cx="782.5" cy="31" r="1" fill="#fff"/>
<path d="M780.5 38.5 L783.5 38.5 L783.5 41.5 L786.5 47.5 Q786.5 49 785 49 L779 49 Q777.5 49 777.5 47.5 L780.5 41.5 Z" fill="#f0c0d8" stroke="#555" stroke-width="0.6"/><path d="M778.5 45 L785.5 45 L786.5 47.5 Q786.5 49 785 49 L779 49 Q777.5 49 777.5 47.5 Z" fill="#e01880"/>
<rect x="548" y="63.5" width="352" height="15" fill="url(#ghTb)"/>
<rect x="548" y="78" width="352" height="1" fill="#e8e8e8"/>
<path d="M552 66 L556 66 L557 67.5 L561 67.5 L561 70 L552 70 Z" fill="#f0f0f0" stroke="#888" stroke-width="0.5"/>
<rect x="551.8" y="69.5" width="9.5" height="6.5" fill="#4ab030" stroke="#2a7a1a" stroke-width="0.6"/>
<rect x="565.8" y="65.8" width="10.5" height="10.3" rx="1" fill="#2456b8" stroke="#163a80" stroke-width="0.6"/><rect x="567.8" y="66.5" width="6.5" height="3.8" fill="#e8eef8"/><rect x="568.5" y="72" width="5" height="3.3" fill="#9ab4e0"/>
<rect x="580" y="64.5" width="0.6" height="13" fill="#ddd"/>
<rect x="582" y="65.5" width="33" height="11" fill="#fbfbfb" stroke="#e4e4e4" stroke-width="0.5"/>
<text x="583.5" y="72.8" font-size="5.8" fill="#333">41%</text>
<path d="M609 70 L611.5 70 L610.25 71.8 Z" fill="#222"/>
<path d="M618.5 68.5 L618.5 66.2 L620.8 66.2 M624.4 66.2 L626.7 66.2 L626.7 68.5 M626.7 72.3 L626.7 74.6 L624.4 74.6 M620.8 74.6 L618.5 74.6 L618.5 72.3" fill="none" stroke="#111" stroke-width="1.3"/><circle cx="622.6" cy="70.4" r="1" fill="#111"/>
<rect x="630.5" y="70" width="1.2" height="1.2" fill="#333"/>
<path d="M635.5 70.5 Q641 65 646.5 70.5 Q641 76 635.5 70.5 Z" fill="#eef6fa" stroke="#222" stroke-width="0.8"/><circle cx="641" cy="70.5" r="2.2" fill="#2aa0c8"/><circle cx="641" cy="70.5" r="0.9" fill="#111"/>
<rect x="650.3" y="70" width="1.2" height="1.2" fill="#333"/>
<path d="M655.5 75.5 Q656 71.5 659 72 L664.5 66 L665.5 67 L660 73 Q660.5 76 655.5 75.5 Z" fill="#e03020" stroke="#5a1a10" stroke-width="0.5"/>
<circle cx="808.3" cy="68.5" r="2.6" fill="#f4f4f4" stroke="#777" stroke-width="0.6"/><path d="M804.5 73 Q808.3 69.5 812 73 Q808.3 76 804.5 73 Z" fill="#222"/>
<rect x="818.5" y="67" width="10" height="7" rx="3" fill="#f0f0f0" stroke="#444" stroke-width="0.8" transform="rotate(-40 823.5 70.5)"/><path d="M821.5 72 L825 68.5 M823 73 L826.3 69.8" stroke="#888" stroke-width="0.5"/>
<rect x="830" y="64.2" width="14" height="13.5" fill="#dbe9f8" stroke="#9cc4ea" stroke-width="0.6"/>
<rect x="832" y="67" width="10" height="7" rx="3" fill="#c01818" stroke="#5a0a0a" stroke-width="0.6" transform="rotate(-40 837 70.5)"/><path d="M834.5 72 L838.5 68" stroke="#f08080" stroke-width="0.8"/>
<rect x="847.3" y="65" width="0.6" height="12" fill="#ccc"/>
<rect x="851.5" y="67" width="12" height="7" rx="3" fill="#40a020" stroke="#1a4a10" stroke-width="0.6" transform="rotate(40 857.5 70.5)"/><path d="M852 71 Q853 75 857 75.5 L854 72 Z" fill="#ddd"/>
<circle cx="870.7" cy="70.5" r="4.8" fill="#f4f4f4" stroke="#666" stroke-width="0.6"/><path d="M870.7 65.7 A4.8 4.8 0 0 0 870.7 75.3 Z" fill="#e07010"/>
<rect x="879" y="65" width="0.6" height="12" fill="#ccc"/>
<circle cx="886.2" cy="70.5" r="4.8" fill="#3a6ac8" stroke="#1a3a80" stroke-width="0.6"/><circle cx="885" cy="69.3" r="2.6" fill="#9cc0f0"/>
<path d="M893 70 L895.5 70 L894.25 71.8 Z" fill="#222"/>
<rect x="897.6" y="0" width="0.8" height="400" fill="#e8e4e0"/><rect x="898.4" y="0" width="1.6" height="400" fill="#a3b2c4"/>
<rect x="548" y="155" width="350" height="1.3" fill="#77736d"/>
<rect x="548" y="156.3" width="350" height="1" fill="#e6e3de"/>
<rect x="549.2" y="189.3" width="47.8" height="46.5" fill="#c4b3e9"/>
<rect x="549.5" y="237.9" width="47" height="50.2" fill="#c4b3e9"/>
<rect x="639.3" y="201.4" width="83.7" height="74.9" fill="#c4b3e9"/>
<rect x="739.3" y="204.5" width="104.3" height="74.5" fill="#c4b3e9"/>
<rect x="812" y="291.3" width="62.5" height="24.2" fill="#c4b3e9"/>
<path d="M586 318 C585 307 596 303 606 305 C614 306 620 312 628 315 C636 319 634 330 627 334 C621 338 622 346 619 352 C615 360 601 360 598 352 C595 345 599 338 594 333 C588 328 586 324 586 318 Z" fill="#cedb92" stroke="#b9c87a" stroke-width="0.6"/>
<path d="M583.7 205.0 C623.7 205.0 660.5 215.5 700.5 215.5" fill="none" stroke="#4a4648" stroke-width="0.75"/>
<path d="M578.8 222.3 L700.5 221.5" fill="none" stroke="#4a4648" stroke-width="0.75"/>
<path d="M578.8 222.3 C596 222 604 205 614.5 197.9" fill="none" stroke="#4a4648" stroke-width="0.75"/>
<path d="M611.5 231.2 C611 215 612 205 614.5 197.9" fill="none" stroke="#4a4648" stroke-width="0.75"/>
<path d="M595.0 229.0 C603.0 229.0 598.0 240.0 606.0 240.0" fill="none" stroke="#4a4648" stroke-width="0.75"/>
<path d="M619.0 239.0 C623.0 239.0 621.7 242.0 625.7 242.0" fill="none" stroke="#4a4648" stroke-width="0.75"/>
<path d="M578.8 222.3 C584 222.5 578 229 582.3 229" fill="none" stroke="#4a4648" stroke-width="0.75"/>
<path d="M577 269.1 C583 269.5 576 282 581 282" fill="none" stroke="#4a4648" stroke-width="0.75"/>
<path d="M576 252.4 L704.5 254.5" fill="none" stroke="#4a4648" stroke-width="0.75"/>
<path d="M577 269.1 C620 266 660 262 704.5 259.5" fill="none" stroke="#4a4648" stroke-width="0.75"/>
<path d="M594 281.8 C606 280 598 254 606 245" fill="none" stroke="#4a4648" stroke-width="0.75"/>
<path d="M606 243 C590 246 592 270 577 269.1" fill="none" stroke="#4a4648" stroke-width="0.75"/>
<path d="M637.9 185.5 L644.3 182.5" fill="none" stroke="#4a4648" stroke-width="0.75"/>
<path d="M637.9 189 L644.3 186.5" fill="none" stroke="#4a4648" stroke-width="0.75"/>
<path d="M637.5 195.6 L644.3 190.5" fill="none" stroke="#4a4648" stroke-width="0.75"/>
<path d="M673.7 233.6 C677.7 233.6 676.7 235.5 680.7 235.5" fill="none" stroke="#4a4648" stroke-width="0.75"/>
<path d="M693.3 235.5 C700 234 697 220 700.5 219" fill="none" stroke="#4a4648" stroke-width="0.75"/>
<path d="M672.5 268.2 C676.5 268.2 676.5 269.5 680.5 269.5" fill="none" stroke="#4a4648" stroke-width="0.75"/>
<path d="M693.8 269.4 C700 268 698 260 704.5 258" fill="none" stroke="#4a4648" stroke-width="0.75"/>
<path d="M628.6 321.5 C648 321 653 312 654 285 C655 250 662 236 680.7 235.5" fill="none" stroke="#4a4648" stroke-width="0.75"/>
<path d="M628.6 321.5 C646 321 651 312 652 295 C653 276 664 270 680.5 269.5" fill="none" stroke="#4a4648" stroke-width="0.75"/>
<path d="M628.6 321.5 C700 318 800 290 897 251" fill="none" stroke="#4a4648" stroke-width="0.75"/>
<path d="M628.6 321.8 C700 320 800 300 897 264" fill="none" stroke="#4a4648" stroke-width="0.75"/>
<path d="M628.6 322 C700 322 780 305 854.5 306.5" fill="none" stroke="#4a4648" stroke-width="0.75"/>
<path d="M621 327.8 C621 336 619 344 617.8 345.2" fill="none" stroke="#4a4648" stroke-width="0.75"/>
<path d="M606.5 321.3 C609.5 321.3 609.2 321.3 612.2 321.3" fill="none" stroke="#4a4648" stroke-width="0.75"/>
<path d="M716.3 217.8 C760 214 790 188 849.5 178" fill="none" stroke="#4a4648" stroke-width="0.75"/>
<path d="M716.3 217.8 C740 218 760 218 779.3 219" fill="none" stroke="#4a4648" stroke-width="0.75"/>
<path d="M785 215.4 C790 200 820 180 849.5 179.5" fill="none" stroke="#4a4648" stroke-width="0.75"/>
<path d="M720.8 256.5 C750 256 760 256 785 255.5" fill="none" stroke="#4a4648" stroke-width="0.75"/>
<path d="M773 238.5 C782 238 780 222 779.3 220" fill="none" stroke="#4a4648" stroke-width="0.75"/>
<path d="M741 256 C760 250 770 226 779.3 221" fill="none" stroke="#4a4648" stroke-width="0.75"/>
<path d="M792.1 219.5 C800 219 798 241 803.8 242" fill="none" stroke="#4a4648" stroke-width="0.75"/>
<path d="M777 275.5 C790 274 780 256 785 256" fill="none" stroke="#4a4648" stroke-width="0.75"/>
<path d="M798 256 C803 255 800 247 803.8 246" fill="none" stroke="#4a4648" stroke-width="0.75"/>
<path d="M818.8 227 C824 227 824 231 828 231" fill="none" stroke="#4a4648" stroke-width="0.75"/>
<path d="M818 243 C824 243 822 231 828 230" fill="none" stroke="#4a4648" stroke-width="0.75"/>
<path d="M841.3 230.5 C848 231 848 237 853.8 237.5" fill="none" stroke="#4a4648" stroke-width="0.75"/>
<path d="M818 243 L853.8 238.5" fill="none" stroke="#4a4648" stroke-width="0.75"/>
<path d="M867 238 C871 238 871 243 875 243" fill="none" stroke="#4a4648" stroke-width="0.75"/>
<path d="M862.5 179 L872 180" fill="none" stroke="#4a4648" stroke-width="0.75"/>
<path d="M885 181 L891.3 182" fill="none" stroke="#4a4648" stroke-width="0.75"/>
<path d="M849.5 181 C835 184 840 200 870 215 C890 225 893 240 888.8 246" fill="none" stroke="#4a4648" stroke-width="0.75"/>
<path d="M888.8 245 L900 246" fill="none" stroke="#4a4648" stroke-width="0.75"/>
<path d="M845.5 311.6 C850 311 850 307 854.5 307" fill="none" stroke="#4a4648" stroke-width="0.75"/>
<path d="M867.5 307 C890 306 880 265 897 262" fill="none" stroke="#4a4648" stroke-width="0.75"/>
<rect x="582.30" y="224.50" width="12.70" height="8.90" rx="1.8" fill="#8c8c96" stroke="#5a5a60" stroke-width="0.8"/>
<rect x="583.57" y="225.50" width="2.54" height="6.90" fill="#b6b6c6"/>
<rect x="591.19" y="225.50" width="2.54" height="6.90" fill="#b6b6c6"/>
<rect x="586.36" y="225.20" width="4.57" height="7.50" fill="#1e1e1e"/>
<rect x="587.25" y="226.30" width="2.79" height="5.30" fill="#3e3e3e"/>
<rect x="581.00" y="277.30" width="13.00" height="9.00" rx="1.8" fill="#8c8c96" stroke="#5a5a60" stroke-width="0.8"/>
<rect x="582.30" y="278.30" width="2.60" height="7.00" fill="#b6b6c6"/>
<rect x="590.10" y="278.30" width="2.60" height="7.00" fill="#b6b6c6"/>
<rect x="585.16" y="278.00" width="4.68" height="7.60" fill="#1e1e1e"/>
<rect x="586.07" y="279.10" width="2.86" height="5.40" fill="#3e3e3e"/>
<rect x="644.30" y="179.10" width="9.30" height="21.00" rx="1.6" fill="#f0f0ee" stroke="#5a5a5a" stroke-width="0.9"/>
<rect x="648.49" y="179.80" width="4.65" height="19.60" rx="1" fill="#2a2a2a"/>
<rect x="605.90" y="231.20" width="13.10" height="15.70" rx="1.6" fill="#f0f0ee" stroke="#5a5a5a" stroke-width="0.9"/>
<rect x="611.14" y="231.90" width="3.93" height="14.30" fill="#262626"/>
<rect x="608.26" y="231.90" width="0.52" height="14.30" fill="#c8c8c8"/>
<rect x="625.70" y="235.90" width="9.40" height="12.80" rx="1.6" fill="#f0f0ee" stroke="#5a5a5a" stroke-width="0.9"/>
<rect x="629.93" y="236.60" width="4.70" height="11.40" rx="1" fill="#2a2a2a"/>
<rect x="700.50" y="212.00" width="15.80" height="11.80" rx="1.6" fill="#f0f0ee" stroke="#5a5a5a" stroke-width="0.9"/>
<rect x="706.82" y="212.70" width="4.74" height="10.40" fill="#262626"/>
<rect x="703.34" y="212.70" width="0.63" height="10.40" fill="#c8c8c8"/>
<rect x="680.70" y="231.00" width="12.60" height="9.00" rx="1.6" fill="#f0f0ee" stroke="#5a5a5a" stroke-width="0.9"/>
<rect x="685.74" y="231.70" width="3.78" height="7.60" fill="#262626"/>
<rect x="682.97" y="231.70" width="0.50" height="7.60" fill="#c8c8c8"/>
<rect x="704.50" y="250.50" width="16.30" height="13.30" rx="1.6" fill="#f0f0ee" stroke="#5a5a5a" stroke-width="0.9"/>
<rect x="711.02" y="251.20" width="4.89" height="11.90" fill="#262626"/>
<rect x="707.43" y="251.20" width="0.65" height="11.90" fill="#c8c8c8"/>
<rect x="680.50" y="265.00" width="13.30" height="8.80" rx="1.6" fill="#f0f0ee" stroke="#5a5a5a" stroke-width="0.9"/>
<rect x="685.82" y="265.70" width="3.99" height="7.40" fill="#262626"/>
<rect x="682.89" y="265.70" width="0.53" height="7.40" fill="#c8c8c8"/>
<rect x="779.30" y="215.40" width="12.80" height="8.70" rx="1.8" fill="#8c8c96" stroke="#5a5a60" stroke-width="0.8"/>
<rect x="780.58" y="216.40" width="2.56" height="6.70" fill="#b6b6c6"/>
<rect x="788.26" y="216.40" width="2.56" height="6.70" fill="#b6b6c6"/>
<rect x="783.40" y="216.10" width="4.61" height="7.30" fill="#1e1e1e"/>
<rect x="784.29" y="217.20" width="2.82" height="5.10" fill="#3e3e3e"/>
<rect x="806.30" y="223.80" width="12.50" height="6.20" rx="1.8" fill="#8c8c96" stroke="#5a5a60" stroke-width="0.8"/>
<rect x="807.55" y="224.80" width="2.50" height="4.20" fill="#b6b6c6"/>
<rect x="815.05" y="224.80" width="2.50" height="4.20" fill="#b6b6c6"/>
<rect x="810.30" y="224.50" width="4.50" height="4.80" fill="#1e1e1e"/>
<rect x="811.17" y="225.60" width="2.75" height="2.60" fill="#3e3e3e"/>
<rect x="828.00" y="226.30" width="13.30" height="8.70" rx="1.6" fill="#f0f0ee" stroke="#5a5a5a" stroke-width="0.9"/>
<rect x="833.32" y="227.00" width="3.99" height="7.30" fill="#262626"/>
<rect x="830.39" y="227.00" width="0.53" height="7.30" fill="#c8c8c8"/>
<rect x="803.80" y="237.00" width="14.20" height="12.50" rx="1.8" fill="#8c8c96" stroke="#5a5a60" stroke-width="0.8"/>
<rect x="805.22" y="238.00" width="2.84" height="10.50" fill="#b6b6c6"/>
<rect x="813.74" y="238.00" width="2.84" height="10.50" fill="#b6b6c6"/>
<rect x="808.34" y="237.70" width="5.11" height="11.10" fill="#1e1e1e"/>
<rect x="809.34" y="238.80" width="3.12" height="8.90" fill="#3e3e3e"/>
<rect x="785.00" y="251.30" width="13.00" height="9.20" rx="1.8" fill="#8c8c96" stroke="#5a5a60" stroke-width="0.8"/>
<rect x="786.30" y="252.30" width="2.60" height="7.20" fill="#b6b6c6"/>
<rect x="794.10" y="252.30" width="2.60" height="7.20" fill="#b6b6c6"/>
<rect x="789.16" y="252.00" width="4.68" height="7.80" fill="#1e1e1e"/>
<rect x="790.07" y="253.10" width="2.86" height="5.60" fill="#3e3e3e"/>
<rect x="849.50" y="174.50" width="13.00" height="9.30" rx="1.8" fill="#8c8c96" stroke="#5a5a60" stroke-width="0.8"/>
<rect x="850.80" y="175.50" width="2.60" height="7.30" fill="#b6b6c6"/>
<rect x="858.60" y="175.50" width="2.60" height="7.30" fill="#b6b6c6"/>
<rect x="853.66" y="175.20" width="4.68" height="7.90" fill="#1e1e1e"/>
<rect x="854.57" y="176.30" width="2.86" height="5.70" fill="#3e3e3e"/>
<rect x="872.00" y="174.50" width="13.00" height="12.50" rx="1.8" fill="#8c8c96" stroke="#5a5a60" stroke-width="0.8"/>
<rect x="873.30" y="175.50" width="2.60" height="10.50" fill="#b6b6c6"/>
<rect x="881.10" y="175.50" width="2.60" height="10.50" fill="#b6b6c6"/>
<rect x="876.16" y="175.20" width="4.68" height="11.10" fill="#1e1e1e"/>
<rect x="877.07" y="176.30" width="2.86" height="8.90" fill="#3e3e3e"/>
<rect x="891.30" y="176.30" width="11.70" height="13.20" rx="1.6" fill="#f0f0ee" stroke="#5a5a5a" stroke-width="0.9"/>
<rect x="896.56" y="177.00" width="5.85" height="11.80" rx="1" fill="#2a2a2a"/>
<rect x="853.80" y="233.00" width="13.20" height="9.50" rx="1.8" fill="#8c8c96" stroke="#5a5a60" stroke-width="0.8"/>
<rect x="855.12" y="234.00" width="2.64" height="7.50" fill="#b6b6c6"/>
<rect x="863.04" y="234.00" width="2.64" height="7.50" fill="#b6b6c6"/>
<rect x="858.02" y="233.70" width="4.75" height="8.10" fill="#1e1e1e"/>
<rect x="858.95" y="234.80" width="2.90" height="5.90" fill="#3e3e3e"/>
<rect x="875.00" y="236.80" width="13.80" height="12.70" rx="1.8" fill="#8c8c96" stroke="#5a5a60" stroke-width="0.8"/>
<rect x="876.38" y="237.80" width="2.76" height="10.70" fill="#b6b6c6"/>
<rect x="884.66" y="237.80" width="2.76" height="10.70" fill="#b6b6c6"/>
<rect x="879.42" y="237.50" width="4.97" height="11.30" fill="#1e1e1e"/>
<rect x="880.38" y="238.60" width="3.04" height="9.10" fill="#3e3e3e"/>
<rect x="612.20" y="315.20" width="16.40" height="12.60" rx="1.8" fill="#8c8c96" stroke="#5a5a60" stroke-width="0.8"/>
<rect x="613.84" y="316.20" width="3.28" height="10.60" fill="#b6b6c6"/>
<rect x="623.68" y="316.20" width="3.28" height="10.60" fill="#b6b6c6"/>
<rect x="617.45" y="315.90" width="5.90" height="11.20" fill="#1e1e1e"/>
<rect x="618.60" y="317.00" width="3.61" height="9.00" fill="#3e3e3e"/>
<rect x="854.50" y="302.50" width="13.00" height="8.80" rx="1.6" fill="#f0f0ee" stroke="#5a5a5a" stroke-width="0.9"/>
<rect x="859.70" y="303.20" width="3.90" height="7.40" fill="#262626"/>
<rect x="856.84" y="303.20" width="0.52" height="7.40" fill="#c8c8c8"/>
<rect x="573.50" y="203.10" width="10.20" height="3.90" rx="1.9500000000000028" fill="#8e8e90" stroke="#3e3e40" stroke-width="0.8"/><rect x="574.90" y="204.10" width="7.40" height="0.75" rx="0.6" fill="#b8b8ba"/>
<rect x="568.00" y="220.20" width="10.80" height="4.30" rx="2.1500000000000057" fill="#8e8e90" stroke="#3e3e40" stroke-width="0.8"/><rect x="569.40" y="221.20" width="8.00" height="0.94" rx="0.6" fill="#b8b8ba"/>
<rect x="565.70" y="250.70" width="10.30" height="3.60" rx="1.8000000000000114" fill="#8e8e90" stroke="#3e3e40" stroke-width="0.8"/><rect x="567.10" y="251.70" width="7.50" height="0.62" rx="0.6" fill="#b8b8ba"/>
<rect x="567.00" y="267.20" width="10.00" height="3.80" rx="1.9000000000000057" fill="#8e8e90" stroke="#3e3e40" stroke-width="0.8"/><rect x="568.40" y="268.20" width="7.20" height="0.71" rx="0.6" fill="#b8b8ba"/>
<rect x="598.60" y="343.00" width="19.20" height="4.40" rx="2.1999999999999886" fill="#8e8e90" stroke="#3e3e40" stroke-width="0.8"/><rect x="600.00" y="344.00" width="16.40" height="0.98" rx="0.6" fill="#b8b8ba"/>
<rect x="606.40" y="193.40" width="31.10" height="4.50" rx="2.25" fill="#ebece4" stroke="#4e4e52" stroke-width="0.8"/>
<path d="M608.65 193.80 L614.40 193.80 L614.40 197.50 L608.65 197.50 A1.85 1.85 0 0 1 608.65 193.80 Z" fill="#9a9aa0"/>
<rect x="642.10" y="231.30" width="31.60" height="4.70" rx="2.3499999999999943" fill="#ebece4" stroke="#4e4e52" stroke-width="0.8"/>
<path d="M644.45 231.70 L647.10 231.70 L647.10 235.60 L644.45 235.60 A1.95 1.95 0 0 1 644.45 231.70 Z" fill="#9a9aa0"/>
<rect x="642.00" y="266.30" width="30.50" height="3.70" rx="1.8499999999999943" fill="#ebece4" stroke="#4e4e52" stroke-width="0.8"/>
<path d="M643.85 266.70 L647.00 266.70 L647.00 269.60 L643.85 269.60 A1.45 1.45 0 0 1 643.85 266.70 Z" fill="#9a9aa0"/>
<rect x="741.30" y="236.30" width="31.70" height="4.50" rx="2.25" fill="#ebece4" stroke="#4e4e52" stroke-width="0.8"/>
<path d="M743.55 236.70 L746.30 236.70 L746.30 240.40 L743.55 240.40 A1.85 1.85 0 0 1 743.55 236.70 Z" fill="#9a9aa0"/>
<rect x="743.80" y="273.30" width="33.20" height="4.20" rx="2.0999999999999943" fill="#ebece4" stroke="#4e4e52" stroke-width="0.8"/>
<path d="M745.90 273.70 L748.80 273.70 L748.80 277.10 L745.90 277.10 A1.70 1.70 0 0 1 745.90 273.70 Z" fill="#9a9aa0"/>
<rect x="813.80" y="309.50" width="31.70" height="4.30" rx="2.1500000000000057" fill="#ebece4" stroke="#4e4e52" stroke-width="0.8"/>
<path d="M815.95 309.90 L817.80 309.90 L817.80 313.40 L815.95 313.40 A1.75 1.75 0 0 1 815.95 309.90 Z" fill="#9a9aa0"/>
<rect x="604.70" y="248.30" width="17.50" height="4.20" rx="2.0999999999999943" fill="#1e6b78" stroke="#4a4a4a" stroke-width="0.7"/>
<rect x="605.30" y="248.90" width="8.70" height="3.00" rx="1" fill="#a4a4b6"/>
<rect x="868.80" y="192.00" width="17.50" height="3.50" rx="1.75" fill="#58a8a0" stroke="#4a4a4a" stroke-width="0.7"/>
<rect x="869.40" y="192.60" width="8.10" height="2.30" rx="1" fill="#a4a4b6"/>
<rect x="587.40" y="319.30" width="19.10" height="4.00" rx="1" fill="#222" stroke="#404040" stroke-width="0.6"/>
<rect x="587.90" y="319.80" width="9.10" height="3.00" rx="0.8" fill="#a8a8b0"/>
<rect x="615.40" y="181.00" width="22.50" height="12.40" rx="0.8" fill="#f0ea72" stroke="#6a6448" stroke-width="0.7"/>
<text x="549.5" y="197" font-size="6.6" font-weight="bold" fill="#111" textLength="16.6" lengthAdjust="spacingAndGlyphs">1 Disc</text>
<text x="550" y="247" font-size="6.6" font-weight="bold" fill="#111" textLength="16.4" lengthAdjust="spacingAndGlyphs">2 Disc</text>
<text x="569.2" y="201.1" font-size="4.3" font-weight="bold" fill="#111" textLength="21.9" lengthAdjust="spacingAndGlyphs">Point on disc</text>
<text x="569" y="249.6" font-size="4.3" font-weight="bold" fill="#111" textLength="21" lengthAdjust="spacingAndGlyphs">Point on disc</text>
<text x="561.9" y="218.3" font-size="5.4" font-weight="bold" fill="#111" textLength="23.5" lengthAdjust="spacingAndGlyphs">1-st center</text>
<text x="562" y="264.3" font-size="5.4" font-weight="bold" fill="#111" textLength="25.5" lengthAdjust="spacingAndGlyphs">2-nd center</text>
<text x="650" y="208.3" font-size="5.2" font-weight="bold" fill="#111" textLength="70" lengthAdjust="spacingAndGlyphs">Speed and direction of rotating</text>
<text x="773.8" y="210.6" font-size="5.6" font-weight="bold" fill="#111" textLength="35" lengthAdjust="spacingAndGlyphs">Length 1 and 2</text>
<text x="815" y="298.7" font-size="5.2" font-weight="bold" fill="#111" textLength="57" lengthAdjust="spacingAndGlyphs">Speed of canvas rotation</text>
<text x="594" y="315" font-size="5.4" font-weight="bold" fill="#111" textLength="9.5" lengthAdjust="spacingAndGlyphs">Run</text>
<rect x="28" y="41" width="516" height="359" fill="#000"/>
<circle cx="293.2" cy="101.8" r="54" fill="#6597a3"/>
<circle cx="149.3" cy="263.4" r="54.3" fill="#6597a3"/>
<text x="293" y="102" font-size="10.2" fill="#7a2a6e" textLength="36" lengthAdjust="spacingAndGlyphs">radius A</text>
<text x="149.5" y="264" font-size="10.2" fill="#7a2a6e" textLength="36.4" lengthAdjust="spacingAndGlyphs">radius B</text>
<g fill="none" stroke="#8e2278" stroke-width="0.8"><path d="M339.5 257.4 339.6 260.0 339.7 262.5 340.0 265.1 340.3 267.7 340.8 270.3 341.3 272.9 341.9 275.6 342.6 278.2 343.3 280.9 344.1 283.6 345.0 286.3 345.9 289.1 346.9 291.8 347.9 294.6 348.9 297.4 350.0 300.2 351.1 302.9 352.2 305.7 353.3 308.4 354.5 311.1 355.6 313.8 356.8 316.4 358.0 318.9 359.2 321.4 360.4 323.7 361.7 325.8 363.0 327.9 364.3 329.7 365.7 331.3 367.2 332.7 368.7 333.8 370.3 334.6 372.1 335.1 373.9 335.2 375.8 334.8 377.9 333.9 380.1 332.5 382.5 330.5 384.9 327.8 387.5 324.4 390.1 320.2 392.7 315.2 395.3 309.4 397.7 302.7 400.0 295.3 401.8 287.1 403.3 278.3 404.3 269.0 404.7 259.5 404.5 249.8 403.7 240.2 402.4 231.0 400.6 222.3 398.4 214.3 395.9 207.0 393.2 200.5 390.4 194.9 387.6 190.1 384.9 186.1 382.3 182.9 379.7 180.4 377.4 178.5 375.1 177.3 373.1 176.5 371.2 176.3 369.4 176.5 367.7 177.1 366.2 178.1 364.7 179.3 363.3 180.9 362.0 182.6 360.8 184.6 359.6 186.8 358.4 189.1 357.3 191.5 356.2 194.1 355.1 196.7 354.1 199.4 353.0 202.2 352.0 205.0 350.9 207.9 349.9 210.8 348.9 213.7 348.0 216.5 347.0 219.4 346.1 222.3 345.2 225.1 344.4 228.0 343.6 230.8 342.8 233.5 342.1 236.3 341.5 239.0 341.0 241.7 340.5 244.4 340.1 247.0 339.8 249.6 339.6 252.2 339.5 254.8 339.5 257.4Z"/><path d="M339.8 260.6 339.6 263.1 339.5 265.7 339.6 268.3 339.7 270.9 339.9 273.6 340.2 276.2 340.5 278.9 341.0 281.6 341.5 284.4 342.1 287.1 342.7 289.9 343.4 292.8 344.1 295.6 344.8 298.5 345.6 301.3 346.4 304.2 347.3 307.1 348.1 309.9 349.0 312.8 349.9 315.6 350.8 318.3 351.8 321.0 352.7 323.7 353.7 326.2 354.8 328.6 355.8 330.9 356.9 333.0 358.1 335.0 359.4 336.7 360.7 338.3 362.1 339.5 363.7 340.5 365.4 341.1 367.2 341.3 369.2 341.1 371.3 340.4 373.7 339.2 376.2 337.3 378.9 334.9 381.7 331.7 384.7 327.8 387.8 323.0 390.9 317.5 393.9 311.0 396.8 303.8 399.4 295.8 401.6 287.1 403.4 278.0 404.7 268.4 405.4 258.8 405.4 249.2 404.9 239.8 403.9 231.0 402.4 222.8 400.6 215.3 398.5 208.6 396.2 202.7 393.8 197.6 391.5 193.4 389.1 190.0 386.8 187.2 384.6 185.2 382.5 183.7 380.5 182.8 378.6 182.4 376.8 182.5 375.1 182.9 373.5 183.7 371.9 184.9 370.4 186.3 368.9 187.9 367.5 189.8 366.1 191.8 364.8 194.0 363.4 196.4 362.1 198.8 360.8 201.4 359.5 204.0 358.2 206.7 356.9 209.4 355.6 212.1 354.3 214.9 353.1 217.7 351.9 220.5 350.7 223.3 349.5 226.1 348.3 228.9 347.2 231.6 346.2 234.3 345.2 237.0 344.3 239.7 343.4 242.4 342.6 245.0 341.9 247.6 341.3 250.2 340.8 252.8 340.4 255.4 340.0 258.0 339.8 260.6Z"/><path d="M339.7 263.7 339.4 266.3 339.1 268.9 338.9 271.5 338.8 274.1 338.7 276.8 338.8 279.4 338.9 282.2 339.1 284.9 339.4 287.7 339.7 290.5 340.1 293.3 340.5 296.2 340.9 299.1 341.4 302.0 342.0 305.0 342.5 307.9 343.1 310.9 343.7 313.8 344.3 316.7 345.0 319.6 345.7 322.4 346.4 325.2 347.1 327.9 347.9 330.5 348.7 333.0 349.5 335.4 350.4 337.6 351.4 339.7 352.5 341.6 353.7 343.2 355.1 344.6 356.5 345.7 358.1 346.4 359.9 346.8 361.9 346.8 364.2 346.3 366.6 345.3 369.3 343.7 372.2 341.4 375.3 338.5 378.6 334.9 382.1 330.4 385.7 325.1 389.3 319.0 392.8 312.0 396.1 304.3 399.2 295.8 401.8 286.8 403.9 277.4 405.4 267.8 406.3 258.2 406.7 248.9 406.4 239.9 405.7 231.6 404.5 223.9 403.0 217.0 401.3 211.0 399.4 205.7 397.4 201.3 395.3 197.6 393.3 194.7 391.3 192.5 389.3 190.8 387.4 189.8 385.5 189.2 383.7 189.1 382.0 189.4 380.2 190.0 378.6 191.0 377.0 192.3 375.4 193.8 373.8 195.5 372.2 197.5 370.7 199.5 369.1 201.8 367.6 204.1 366.0 206.5 364.5 209.0 362.9 211.6 361.4 214.2 359.9 216.8 358.4 219.5 356.9 222.2 355.4 224.8 353.9 227.5 352.5 230.2 351.1 232.9 349.8 235.5 348.5 238.1 347.3 240.7 346.1 243.3 345.0 245.9 344.0 248.5 343.1 251.0 342.2 253.6 341.5 256.1 340.8 258.7 340.2 261.2 339.7 263.7Z"/><path d="M339.5 266.9 338.8 269.4 338.3 272.0 337.9 274.6 337.5 277.2 337.3 279.8 337.1 282.5 337.0 285.2 336.9 288.0 336.9 290.8 337.0 293.6 337.1 296.5 337.3 299.4 337.5 302.4 337.7 305.3 338.0 308.3 338.3 311.3 338.6 314.3 339.0 317.3 339.3 320.2 339.7 323.2 340.1 326.1 340.6 328.9 341.1 331.7 341.6 334.3 342.2 336.9 342.8 339.4 343.6 341.7 344.4 343.8 345.3 345.8 346.3 347.5 347.5 349.0 348.9 350.2 350.4 351.1 352.2 351.7 354.2 351.8 356.5 351.5 359.0 350.7 361.8 349.4 364.9 347.4 368.3 344.8 371.9 341.4 375.8 337.3 379.9 332.3 384.0 326.5 388.1 319.9 392.2 312.4 395.9 304.2 399.3 295.5 402.3 286.3 404.7 276.8 406.4 267.3 407.6 258.0 408.1 249.1 408.1 240.7 407.7 232.9 406.8 225.9 405.6 219.7 404.1 214.3 402.5 209.7 400.8 205.9 399.1 202.8 397.2 200.3 395.4 198.5 393.6 197.3 391.8 196.6 390.0 196.3 388.2 196.4 386.5 196.9 384.7 197.8 383.0 198.9 381.2 200.3 379.5 201.9 377.8 203.6 376.0 205.6 374.3 207.6 372.6 209.8 370.8 212.1 369.0 214.5 367.3 216.9 365.5 219.4 363.7 221.9 362.0 224.4 360.3 226.9 358.5 229.5 356.9 232.0 355.2 234.6 353.6 237.1 352.0 239.6 350.5 242.1 349.0 244.6 347.6 247.1 346.3 249.6 345.1 252.1 343.9 254.5 342.8 257.0 341.9 259.5 341.0 261.9 340.2 264.4 339.5 266.9Z"/><path d="M338.9 270.1 338.0 272.5 337.3 275.0 336.6 277.6 336.0 280.1 335.5 282.8 335.1 285.4 334.8 288.1 334.5 290.9 334.2 293.7 334.0 296.5 333.9 299.4 333.8 302.3 333.8 305.3 333.7 308.3 333.7 311.3 333.8 314.3 333.8 317.3 333.9 320.3 334.0 323.3 334.1 326.3 334.3 329.2 334.5 332.1 334.7 334.9 335.0 337.6 335.4 340.2 335.8 342.7 336.3 345.1 336.9 347.3 337.7 349.3 338.6 351.2 339.6 352.8 340.9 354.1 342.3 355.1 344.1 355.8 346.0 356.2 348.3 356.1 350.9 355.5 353.8 354.4 357.1 352.7 360.7 350.4 364.7 347.4 368.9 343.6 373.4 339.0 378.1 333.5 382.8 327.3 387.4 320.2 391.9 312.4 396.1 303.9 399.9 295.0 403.1 285.8 405.7 276.5 407.7 267.3 409.1 258.4 409.8 250.0 410.0 242.2 409.8 235.1 409.1 228.8 408.2 223.3 407.0 218.6 405.6 214.6 404.1 211.3 402.5 208.7 400.9 206.8 399.1 205.4 397.4 204.5 395.6 204.0 393.9 204.0 392.1 204.4 390.2 205.1 388.4 206.0 386.5 207.2 384.7 208.7 382.8 210.3 380.9 212.1 379.0 214.0 377.0 216.0 375.1 218.1 373.1 220.3 371.1 222.6 369.1 224.9 367.2 227.2 365.2 229.6 363.2 232.0 361.3 234.4 359.4 236.8 357.5 239.2 355.6 241.6 353.8 243.9 352.1 246.3 350.4 248.7 348.8 251.0 347.3 253.4 345.8 255.7 344.4 258.1 343.1 260.5 341.9 262.8 340.8 265.2 339.8 267.6 338.9 270.1Z"/><path d="M338.0 273.2 337.0 275.6 336.0 278.0 335.1 280.5 334.3 283.0 333.6 285.5 332.9 288.2 332.3 290.8 331.8 293.6 331.3 296.3 330.8 299.2 330.4 302.0 330.1 304.9 329.8 307.9 329.5 310.8 329.2 313.8 329.0 316.8 328.8 319.9 328.6 322.9 328.4 325.9 328.3 328.8 328.2 331.8 328.1 334.7 328.1 337.5 328.1 340.2 328.3 342.9 328.5 345.4 328.8 347.8 329.2 350.1 329.8 352.2 330.5 354.1 331.4 355.8 332.5 357.2 333.9 358.4 335.6 359.3 337.5 359.8 339.8 359.9 342.4 359.5 345.5 358.7 348.9 357.3 352.7 355.3 356.9 352.6 361.5 349.2 366.4 345.0 371.5 340.0 376.8 334.2 382.1 327.5 387.2 320.1 392.2 312.1 396.7 303.5 400.8 294.6 404.2 285.5 407.0 276.5 409.1 267.8 410.6 259.4 411.5 251.7 411.9 244.6 411.8 238.2 411.4 232.6 410.6 227.8 409.6 223.7 408.4 220.3 407.0 217.6 405.5 215.5 404.0 213.9 402.3 212.9 400.6 212.3 398.8 212.1 397.0 212.3 395.1 212.8 393.2 213.6 391.2 214.7 389.2 215.9 387.2 217.4 385.1 219.0 383.0 220.7 380.9 222.6 378.8 224.5 376.6 226.6 374.4 228.6 372.3 230.8 370.1 232.9 367.9 235.1 365.7 237.3 363.6 239.5 361.4 241.7 359.3 244.0 357.3 246.2 355.3 248.4 353.3 250.6 351.5 252.8 349.6 255.0 347.9 257.3 346.2 259.5 344.6 261.7 343.1 264.0 341.7 266.2 340.4 268.5 339.2 270.8 338.0 273.2Z"/><path d="M336.9 276.2 335.6 278.5 334.4 280.8 333.3 283.2 332.3 285.6 331.3 288.1 330.4 290.7 329.6 293.3 328.8 296.0 328.1 298.7 327.4 301.5 326.7 304.3 326.1 307.2 325.5 310.1 325.0 313.0 324.5 316.0 324.0 319.0 323.5 322.0 323.0 325.0 322.6 327.9 322.2 330.9 321.8 333.8 321.5 336.7 321.2 339.5 321.0 342.3 320.9 344.9 320.9 347.5 321.0 349.9 321.2 352.2 321.6 354.4 322.1 356.3 322.9 358.1 323.9 359.6 325.2 360.9 326.7 361.9 328.7 362.6 330.9 362.9 333.6 362.8 336.7 362.3 340.2 361.2 344.2 359.5 348.7 357.2 353.5 354.2 358.8 350.5 364.3 345.9 370.1 340.6 376.0 334.4 381.9 327.5 387.5 319.9 392.8 311.7 397.6 303.1 401.9 294.4 405.5 285.7 408.4 277.1 410.6 268.9 412.2 261.3 413.2 254.2 413.7 247.9 413.7 242.3 413.4 237.4 412.8 233.2 411.9 229.7 410.8 226.8 409.5 224.6 408.0 222.9 406.5 221.7 404.8 221.0 403.0 220.6 401.2 220.7 399.3 221.0 397.3 221.6 395.2 222.5 393.1 223.6 391.0 224.9 388.8 226.3 386.5 227.8 384.2 229.5 381.9 231.2 379.6 233.1 377.2 235.0 374.8 236.9 372.5 238.8 370.1 240.8 367.7 242.8 365.4 244.9 363.1 246.9 360.8 248.9 358.5 251.0 356.3 253.0 354.2 255.0 352.1 257.1 350.1 259.1 348.2 261.2 346.3 263.2 344.5 265.3 342.8 267.4 341.2 269.6 339.7 271.7 338.2 273.9 336.9 276.2Z"/><path d="M335.5 279.1 334.0 281.3 332.6 283.5 331.3 285.8 330.1 288.1 328.9 290.5 327.7 293.0 326.7 295.6 325.7 298.1 324.7 300.8 323.8 303.5 322.9 306.3 322.0 309.1 321.1 311.9 320.3 314.8 319.5 317.7 318.8 320.7 318.0 323.6 317.3 326.6 316.6 329.5 315.9 332.4 315.3 335.3 314.7 338.2 314.2 340.9 313.8 343.7 313.4 346.3 313.2 348.9 313.0 351.3 313.1 353.6 313.2 355.8 313.6 357.8 314.2 359.6 315.1 361.3 316.2 362.7 317.7 363.8 319.6 364.7 321.8 365.2 324.5 365.3 327.6 365.0 331.2 364.3 335.4 363.0 340.0 361.1 345.1 358.5 350.7 355.2 356.7 351.2 362.9 346.3 369.4 340.7 375.8 334.3 382.1 327.2 388.2 319.5 393.7 311.4 398.8 303.1 403.1 294.7 406.8 286.4 409.7 278.4 412.0 270.9 413.7 264.0 414.7 257.7 415.3 252.1 415.4 247.1 415.1 242.9 414.5 239.3 413.6 236.4 412.6 234.0 411.3 232.2 409.8 230.9 408.2 230.0 406.5 229.5 404.6 229.4 402.7 229.6 400.6 230.0 398.5 230.7 396.3 231.6 394.1 232.7 391.7 233.9 389.3 235.2 386.9 236.7 384.5 238.2 382.0 239.8 379.4 241.5 376.9 243.2 374.3 245.0 371.8 246.8 369.3 248.6 366.7 250.4 364.2 252.2 361.8 254.0 359.4 255.8 357.0 257.7 354.7 259.5 352.4 261.4 350.2 263.2 348.1 265.1 346.0 267.0 344.1 268.9 342.2 270.9 340.4 272.9 338.7 274.9 337.0 277.0 335.5 279.1Z"/><path d="M333.8 281.9 332.2 283.9 330.6 286.0 329.1 288.2 327.6 290.4 326.2 292.7 324.9 295.1 323.6 297.5 322.3 300.0 321.1 302.6 319.9 305.2 318.8 307.9 317.7 310.6 316.6 313.4 315.5 316.2 314.4 319.0 313.4 321.9 312.4 324.8 311.4 327.7 310.5 330.5 309.5 333.4 308.7 336.2 307.8 339.0 307.1 341.7 306.4 344.4 305.8 347.0 305.3 349.6 305.0 352.0 304.8 354.3 304.8 356.5 305.0 358.5 305.4 360.4 306.1 362.1 307.2 363.6 308.5 364.9 310.3 365.9 312.5 366.6 315.2 367.0 318.3 367.0 322.0 366.5 326.2 365.6 331.0 364.1 336.4 362.0 342.3 359.3 348.6 355.7 355.2 351.5 362.2 346.4 369.2 340.6 376.1 334.1 382.8 326.9 389.1 319.4 394.9 311.5 400.0 303.5 404.4 295.5 408.0 287.8 411.0 280.5 413.2 273.8 414.8 267.6 415.9 262.0 416.4 257.1 416.5 252.8 416.3 249.2 415.7 246.2 414.8 243.8 413.7 241.8 412.3 240.4 410.8 239.3 409.1 238.7 407.3 238.4 405.3 238.4 403.3 238.7 401.1 239.2 398.8 239.9 396.4 240.7 394.0 241.7 391.5 242.9 389.0 244.1 386.4 245.4 383.7 246.8 381.1 248.3 378.4 249.8 375.7 251.3 373.0 252.8 370.3 254.4 367.6 256.0 364.9 257.6 362.3 259.2 359.7 260.8 357.2 262.4 354.7 264.0 352.3 265.7 349.9 267.3 347.7 269.0 345.4 270.7 343.3 272.5 341.2 274.3 339.3 276.1 337.4 278.0 335.6 279.9 333.8 281.9Z"/><path d="M331.9 284.5 330.1 286.4 328.3 288.3 326.6 290.4 324.9 292.5 323.3 294.6 321.8 296.9 320.3 299.2 318.8 301.6 317.4 304.1 316.0 306.6 314.6 309.1 313.2 311.8 311.9 314.4 310.6 317.2 309.3 319.9 308.0 322.7 306.7 325.4 305.5 328.2 304.3 331.0 303.1 333.8 302.0 336.5 300.9 339.2 299.9 341.9 299.0 344.5 298.1 347.1 297.4 349.5 296.9 351.9 296.5 354.2 296.3 356.4 296.3 358.5 296.6 360.4 297.1 362.2 298.0 363.7 299.3 365.1 300.9 366.3 303.1 367.2 305.7 367.8 308.8 368.1 312.6 368.0 316.9 367.4 321.8 366.4 327.3 364.8 333.4 362.5 340.1 359.6 347.1 355.9 354.5 351.5 362.0 346.3 369.5 340.4 376.8 333.9 383.8 326.9 390.2 319.5 396.1 311.9 401.2 304.4 405.5 297.1 409.1 290.0 411.9 283.5 414.1 277.4 415.6 272.0 416.6 267.1 417.1 262.9 417.2 259.2 416.8 256.2 416.2 253.7 415.2 251.6 414.0 250.1 412.6 248.9 411.0 248.1 409.2 247.6 407.2 247.5 405.1 247.5 402.9 247.9 400.5 248.3 398.1 249.0 395.6 249.8 393.0 250.7 390.3 251.7 387.6 252.8 384.9 254.0 382.1 255.2 379.3 256.4 376.4 257.7 373.6 259.0 370.8 260.3 368.0 261.6 365.2 263.0 362.4 264.4 359.7 265.7 357.0 267.1 354.4 268.5 351.8 270.0 349.3 271.4 346.9 272.9 344.5 274.4 342.2 276.0 340.0 277.6 337.9 279.2 335.8 280.9 333.8 282.7 331.9 284.5Z"/><path d="M329.8 287.0 327.8 288.7 325.8 290.5 323.9 292.3 322.1 294.3 320.3 296.3 318.6 298.4 316.9 300.6 315.2 302.9 313.5 305.2 311.9 307.6 310.3 310.0 308.7 312.5 307.1 315.1 305.6 317.7 304.0 320.3 302.5 322.9 301.0 325.6 299.5 328.3 298.0 330.9 296.6 333.6 295.2 336.2 293.9 338.8 292.7 341.4 291.5 343.9 290.5 346.4 289.6 348.8 288.8 351.2 288.2 353.4 287.8 355.6 287.6 357.6 287.7 359.6 288.1 361.4 288.9 363.1 290.0 364.6 291.6 365.9 293.6 367.0 296.2 367.8 299.3 368.4 303.0 368.6 307.4 368.4 312.4 367.8 318.1 366.7 324.4 365.0 331.2 362.6 338.6 359.6 346.3 355.8 354.3 351.3 362.3 346.1 370.2 340.3 377.8 333.9 384.9 327.1 391.4 320.1 397.1 313.0 402.1 306.1 406.3 299.4 409.8 293.1 412.5 287.2 414.5 281.9 415.9 277.1 416.8 272.9 417.1 269.3 417.1 266.2 416.7 263.7 415.9 261.6 414.8 259.9 413.5 258.6 412.0 257.7 410.2 257.0 408.3 256.7 406.2 256.6 403.9 256.7 401.5 257.0 399.0 257.4 396.5 258.0 393.8 258.7 391.0 259.4 388.2 260.3 385.4 261.2 382.5 262.1 379.6 263.1 376.6 264.1 373.7 265.2 370.7 266.3 367.8 267.3 364.9 268.4 362.0 269.6 359.2 270.7 356.4 271.8 353.6 273.0 350.9 274.2 348.3 275.4 345.7 276.7 343.3 278.0 340.8 279.4 338.5 280.8 336.2 282.2 334.0 283.7 331.9 285.3 329.8 287.0Z"/><path d="M327.4 289.2 325.3 290.7 323.2 292.4 321.1 294.1 319.1 295.9 317.1 297.7 315.2 299.7 313.3 301.7 311.4 303.8 309.6 306.0 307.7 308.2 305.9 310.5 304.1 312.9 302.3 315.3 300.5 317.7 298.7 320.2 297.0 322.7 295.2 325.2 293.5 327.8 291.8 330.3 290.1 332.8 288.5 335.3 287.0 337.8 285.5 340.3 284.1 342.7 282.9 345.1 281.7 347.4 280.8 349.7 280.0 351.9 279.4 354.0 279.0 356.0 279.0 358.0 279.2 359.8 279.8 361.6 280.8 363.2 282.2 364.6 284.2 365.9 286.7 367.0 289.7 367.8 293.4 368.3 297.8 368.6 302.9 368.4 308.6 367.8 315.1 366.6 322.1 364.9 329.7 362.5 337.8 359.5 346.2 355.7 354.7 351.2 363.1 346.0 371.2 340.3 378.9 334.2 386.0 327.8 392.4 321.2 398.0 314.7 402.8 308.4 406.8 302.4 410.0 296.8 412.5 291.7 414.3 287.1 415.5 283.0 416.2 279.4 416.5 276.3 416.3 273.7 415.7 271.5 414.8 269.8 413.6 268.4 412.1 267.3 410.4 266.5 408.5 266.0 406.4 265.7 404.1 265.6 401.7 265.7 399.2 265.9 396.6 266.2 393.9 266.7 391.1 267.2 388.2 267.8 385.2 268.4 382.3 269.1 379.3 269.8 376.2 270.6 373.2 271.4 370.2 272.2 367.1 273.0 364.1 273.9 361.2 274.7 358.2 275.6 355.3 276.5 352.5 277.4 349.7 278.4 347.0 279.4 344.3 280.4 341.7 281.5 339.1 282.6 336.7 283.8 334.3 285.0 331.9 286.4 329.6 287.7 327.4 289.2Z"/><path d="M324.9 291.3 322.6 292.6 320.3 294.0 318.1 295.5 316.0 297.1 313.8 298.8 311.7 300.6 309.7 302.5 307.6 304.4 305.6 306.4 303.5 308.5 301.5 310.6 299.5 312.8 297.5 315.0 295.5 317.3 293.5 319.6 291.5 322.0 289.5 324.3 287.6 326.7 285.6 329.1 283.8 331.5 281.9 333.8 280.2 336.2 278.5 338.5 276.9 340.8 275.4 343.1 274.1 345.3 272.9 347.5 271.9 349.6 271.1 351.7 270.6 353.7 270.3 355.6 270.4 357.5 270.9 359.3 271.7 360.9 273.0 362.5 274.9 364.0 277.2 365.2 280.2 366.4 283.9 367.2 288.2 367.9 293.3 368.1 299.1 368.0 305.6 367.5 312.8 366.4 320.7 364.7 329.0 362.3 337.7 359.3 346.5 355.6 355.4 351.2 364.0 346.2 372.3 340.8 379.9 335.0 386.9 329.0 393.0 323.0 398.4 317.2 402.9 311.5 406.6 306.2 409.6 301.3 411.8 296.9 413.4 292.9 414.4 289.4 414.9 286.3 415.0 283.7 414.6 281.5 413.8 279.6 412.7 278.1 411.4 276.9 409.7 276.0 407.9 275.3 405.8 274.8 403.6 274.5 401.2 274.4 398.7 274.4 396.0 274.5 393.2 274.7 390.4 274.9 387.4 275.3 384.5 275.6 381.4 276.1 378.4 276.5 375.3 277.0 372.2 277.5 369.1 278.1 366.0 278.6 362.9 279.2 359.9 279.8 356.8 280.4 353.9 281.0 350.9 281.7 348.1 282.4 345.3 283.2 342.5 284.0 339.8 284.8 337.2 285.7 334.6 286.7 332.1 287.7 329.6 288.8 327.2 290.0 324.9 291.3Z"/><path d="M322.2 293.1 319.7 294.2 317.4 295.4 315.0 296.8 312.7 298.2 310.5 299.7 308.2 301.2 306.0 302.9 303.7 304.6 301.5 306.5 299.3 308.4 297.1 310.3 294.9 312.3 292.7 314.4 290.4 316.5 288.2 318.6 286.1 320.8 283.9 323.0 281.7 325.2 279.6 327.4 277.5 329.6 275.5 331.8 273.5 334.0 271.6 336.1 269.8 338.3 268.1 340.4 266.6 342.5 265.2 344.6 264.1 346.6 263.1 348.6 262.4 350.6 262.0 352.5 261.9 354.3 262.2 356.2 262.9 357.9 264.0 359.6 265.7 361.2 268.0 362.7 270.9 364.1 274.4 365.3 278.7 366.3 283.8 367.0 289.6 367.4 296.1 367.5 303.4 367.0 311.4 366.0 319.9 364.4 328.9 362.2 338.1 359.2 347.3 355.6 356.3 351.4 365.0 346.7 373.2 341.6 380.7 336.3 387.4 330.9 393.2 325.5 398.3 320.3 402.4 315.3 405.8 310.7 408.5 306.4 410.4 302.6 411.7 299.2 412.5 296.2 412.8 293.5 412.6 291.3 412.0 289.4 411.1 287.8 409.8 286.4 408.3 285.4 406.5 284.5 404.4 283.9 402.2 283.4 399.9 283.0 397.3 282.8 394.7 282.6 391.9 282.6 389.0 282.6 386.1 282.7 383.0 282.8 380.0 283.0 376.9 283.1 373.7 283.4 370.6 283.6 367.5 283.8 364.3 284.1 361.2 284.4 358.1 284.7 355.0 285.1 352.0 285.5 349.0 285.9 346.1 286.3 343.2 286.8 340.4 287.4 337.6 288.0 334.9 288.6 332.3 289.4 329.7 290.2 327.1 291.1 324.6 292.0 322.2 293.1Z"/><path d="M319.3 294.6 316.8 295.6 314.3 296.6 311.8 297.7 309.4 298.9 307.0 300.2 304.6 301.6 302.2 303.0 299.8 304.6 297.5 306.2 295.1 307.9 292.7 309.6 290.3 311.4 287.9 313.3 285.5 315.2 283.1 317.1 280.8 319.1 278.4 321.1 276.0 323.1 273.7 325.1 271.4 327.1 269.2 329.1 267.1 331.1 265.0 333.1 263.0 335.1 261.1 337.1 259.4 339.1 257.8 341.0 256.5 342.9 255.3 344.8 254.5 346.7 253.9 348.6 253.6 350.4 253.7 352.3 254.3 354.1 255.3 355.9 256.9 357.6 259.0 359.3 261.7 361.0 265.2 362.5 269.4 363.9 274.3 365.1 280.1 366.0 286.7 366.6 294.0 366.8 302.0 366.5 310.7 365.7 319.8 364.2 329.3 362.1 338.8 359.3 348.2 356.0 357.3 352.0 365.9 347.7 373.9 343.0 381.0 338.2 387.4 333.3 392.8 328.6 397.5 324.0 401.2 319.7 404.3 315.7 406.5 312.0 408.2 308.7 409.2 305.8 409.7 303.2 409.7 300.9 409.3 299.0 408.5 297.3 407.4 295.8 405.9 294.6 404.2 293.6 402.3 292.8 400.1 292.1 397.7 291.5 395.2 291.1 392.6 290.7 389.8 290.4 387.0 290.1 384.0 290.0 381.0 289.8 377.9 289.7 374.8 289.6 371.6 289.5 368.5 289.5 365.3 289.5 362.2 289.5 359.0 289.5 355.9 289.5 352.8 289.6 349.8 289.7 346.7 289.8 343.8 290.0 340.9 290.3 338.0 290.6 335.2 290.9 332.4 291.3 329.7 291.8 327.0 292.4 324.4 293.1 321.8 293.8 319.3 294.6Z"/><path d="M316.3 296.0 313.7 296.7 311.1 297.4 308.6 298.3 306.0 299.3 303.5 300.4 301.0 301.5 298.5 302.8 296.0 304.1 293.4 305.5 290.9 307.0 288.4 308.5 285.8 310.1 283.3 311.8 280.7 313.4 278.2 315.2 275.6 316.9 273.1 318.7 270.6 320.5 268.1 322.3 265.6 324.1 263.2 325.9 260.9 327.7 258.6 329.5 256.4 331.4 254.4 333.2 252.5 335.0 250.8 336.8 249.3 338.6 247.9 340.4 246.9 342.2 246.1 344.0 245.7 345.8 245.7 347.7 246.1 349.5 246.9 351.4 248.3 353.3 250.3 355.2 252.9 357.1 256.2 358.9 260.3 360.6 265.1 362.3 270.8 363.7 277.3 364.9 284.6 365.8 292.6 366.2 301.3 366.1 310.6 365.5 320.2 364.2 330.0 362.3 339.7 359.8 349.1 356.6 358.1 353.1 366.4 349.1 374.0 344.9 380.8 340.7 386.7 336.4 391.7 332.2 395.9 328.3 399.2 324.5 401.8 321.1 403.8 317.9 405.1 315.1 405.8 312.5 406.0 310.3 405.8 308.3 405.1 306.5 404.1 305.0 402.8 303.7 401.2 302.5 399.3 301.5 397.2 300.6 394.9 299.8 392.4 299.1 389.8 298.5 387.1 298.0 384.2 297.5 381.3 297.0 378.3 296.6 375.2 296.2 372.1 295.9 369.0 295.5 365.8 295.2 362.7 294.9 359.5 294.6 356.4 294.3 353.3 294.1 350.2 293.9 347.1 293.7 344.1 293.6 341.1 293.5 338.2 293.5 335.3 293.6 332.5 293.7 329.7 293.8 326.9 294.1 324.2 294.4 321.5 294.8 318.9 295.3 316.3 296.0Z"/><path d="M313.1 297.0 310.5 297.5 307.8 298.0 305.2 298.7 302.6 299.4 300.0 300.3 297.4 301.2 294.8 302.2 292.1 303.3 289.5 304.5 286.8 305.8 284.2 307.1 281.5 308.4 278.8 309.8 276.1 311.3 273.4 312.8 270.7 314.3 268.0 315.9 265.3 317.4 262.7 319.0 260.0 320.6 257.5 322.2 255.0 323.8 252.6 325.4 250.2 327.0 248.1 328.6 246.0 330.3 244.1 331.9 242.4 333.6 241.0 335.2 239.8 337.0 238.8 338.7 238.3 340.5 238.1 342.3 238.3 344.2 239.0 346.2 240.2 348.2 242.0 350.3 244.4 352.4 247.6 354.5 251.5 356.6 256.2 358.6 261.7 360.6 268.1 362.4 275.3 363.9 283.3 365.0 292.0 365.7 301.3 365.9 311.0 365.5 320.9 364.5 330.8 362.8 340.5 360.5 349.8 357.7 358.5 354.6 366.4 351.1 373.6 347.4 379.8 343.6 385.2 339.9 389.7 336.3 393.4 332.9 396.3 329.7 398.5 326.7 400.1 324.0 401.0 321.5 401.5 319.3 401.4 317.3 400.9 315.5 400.0 313.9 398.8 312.4 397.3 311.1 395.5 309.9 393.5 308.8 391.3 307.9 388.9 307.0 386.3 306.1 383.7 305.3 380.9 304.6 378.0 303.9 375.0 303.2 372.0 302.5 368.9 301.9 365.8 301.3 362.7 300.7 359.6 300.1 356.5 299.5 353.4 299.0 350.3 298.4 347.2 298.0 344.2 297.5 341.1 297.1 338.2 296.8 335.2 296.5 332.4 296.3 329.5 296.1 326.7 296.1 323.9 296.1 321.2 296.2 318.5 296.3 315.8 296.6 313.1 297.0Z"/><path d="M309.9 297.7 307.2 298.0 304.5 298.3 301.9 298.7 299.2 299.3 296.5 299.9 293.8 300.6 291.1 301.4 288.4 302.2 285.6 303.2 282.9 304.2 280.1 305.2 277.3 306.3 274.5 307.5 271.6 308.7 268.8 310.0 266.0 311.3 263.1 312.6 260.3 313.9 257.5 315.2 254.8 316.6 252.1 317.9 249.5 319.3 246.9 320.7 244.4 322.1 242.1 323.5 239.9 325.0 237.9 326.5 236.1 328.0 234.4 329.5 233.1 331.1 232.0 332.8 231.3 334.5 230.9 336.3 230.9 338.3 231.5 340.3 232.5 342.4 234.1 344.6 236.4 346.9 239.3 349.3 243.0 351.8 247.5 354.2 252.9 356.7 259.1 359.0 266.1 361.1 274.0 363.0 282.7 364.5 291.9 365.5 301.7 366.0 311.7 365.8 321.7 365.0 331.6 363.6 341.1 361.7 350.1 359.3 358.3 356.5 365.8 353.5 372.4 350.3 378.1 347.1 382.9 343.9 386.9 340.8 390.1 337.8 392.5 335.1 394.3 332.5 395.5 330.1 396.1 327.9 396.2 325.9 395.9 324.0 395.2 322.3 394.1 320.8 392.7 319.3 391.0 318.0 389.1 316.7 387.0 315.6 384.7 314.5 382.2 313.4 379.6 312.4 376.9 311.4 374.0 310.4 371.1 309.5 368.2 308.5 365.2 307.6 362.1 306.7 359.1 305.8 356.0 305.0 353.0 304.1 349.9 303.3 346.9 302.5 343.8 301.8 340.8 301.1 337.9 300.4 334.9 299.8 332.0 299.2 329.2 298.8 326.3 298.4 323.5 298.0 320.8 297.8 318.0 297.6 315.3 297.6 312.6 297.6 309.9 297.7Z"/><path d="M306.6 298.2 303.9 298.2 301.2 298.3 298.5 298.5 295.8 298.8 293.1 299.1 290.3 299.6 287.5 300.1 284.7 300.8 281.9 301.5 279.1 302.2 276.2 303.0 273.3 303.9 270.4 304.8 267.4 305.8 264.5 306.8 261.6 307.8 258.6 308.8 255.7 309.9 252.8 311.0 249.9 312.1 247.1 313.2 244.3 314.4 241.7 315.5 239.1 316.7 236.6 317.9 234.3 319.2 232.2 320.5 230.2 321.8 228.4 323.2 226.9 324.7 225.7 326.3 224.8 327.9 224.3 329.7 224.2 331.6 224.5 333.7 225.4 335.9 226.8 338.2 228.8 340.8 231.5 343.4 235.0 346.2 239.3 349.1 244.4 352.0 250.4 354.8 257.3 357.6 265.0 360.2 273.5 362.4 282.6 364.3 292.3 365.6 302.3 366.3 312.4 366.4 322.4 365.9 332.1 364.8 341.3 363.2 349.7 361.2 357.4 358.8 364.3 356.2 370.3 353.5 375.4 350.8 379.6 348.0 383.1 345.4 385.8 342.8 387.8 340.4 389.2 338.1 390.0 336.0 390.3 334.0 390.2 332.1 389.6 330.4 388.6 328.7 387.4 327.1 385.8 325.7 384.0 324.2 382.0 322.9 379.8 321.6 377.4 320.3 374.9 319.0 372.3 317.8 369.5 316.6 366.7 315.4 363.8 314.2 360.9 313.0 358.0 311.8 355.0 310.7 352.0 309.5 349.0 308.4 346.1 307.3 343.1 306.3 340.1 305.3 337.2 304.3 334.3 303.4 331.4 302.5 328.6 301.7 325.8 301.0 323.0 300.3 320.2 299.7 317.5 299.2 314.7 298.8 312.0 298.5 309.3 298.3 306.6 298.2Z"/><path d="M303.3 298.4 300.6 298.1 297.9 298.0 295.2 297.9 292.4 298.0 289.7 298.1 286.9 298.3 284.1 298.6 281.2 299.0 278.3 299.4 275.4 299.9 272.5 300.5 269.5 301.1 266.5 301.8 263.5 302.4 260.5 303.2 257.5 303.9 254.4 304.7 251.4 305.5 248.4 306.4 245.4 307.2 242.5 308.1 239.7 309.0 236.9 309.9 234.2 310.9 231.7 311.8 229.2 312.9 227.0 314.0 224.9 315.1 223.0 316.4 221.4 317.7 220.0 319.2 219.0 320.8 218.3 322.5 218.0 324.4 218.2 326.5 218.8 328.8 220.0 331.2 221.8 333.9 224.3 336.8 227.5 339.9 231.6 343.2 236.4 346.5 242.1 349.9 248.7 353.3 256.2 356.6 264.5 359.6 273.5 362.2 283.0 364.4 292.9 366.0 303.0 367.0 313.0 367.4 322.8 367.2 332.1 366.4 340.7 365.1 348.6 363.4 355.7 361.5 361.9 359.3 367.3 357.0 371.8 354.6 375.5 352.3 378.4 350.0 380.6 347.8 382.2 345.6 383.2 343.5 383.7 341.6 383.7 339.7 383.3 337.9 382.5 336.1 381.3 334.5 379.9 332.9 378.3 331.3 376.4 329.7 374.3 328.2 372.0 326.7 369.6 325.3 367.1 323.8 364.5 322.3 361.8 320.9 359.0 319.4 356.2 318.0 353.4 316.6 350.5 315.1 347.6 313.7 344.7 312.4 341.9 311.0 339.0 309.7 336.1 308.4 333.3 307.2 330.5 306.0 327.7 304.9 324.9 303.8 322.2 302.8 319.4 301.9 316.7 301.1 314.0 300.4 311.3 299.7 308.7 299.2 306.0 298.7 303.3 298.4Z"/><path d="M300.0 298.3 297.3 297.8 294.6 297.4 291.9 297.1 289.2 296.9 286.4 296.8 283.6 296.7 280.7 296.8 277.9 296.9 274.9 297.1 272.0 297.3 269.0 297.6 266.0 298.0 262.9 298.4 259.9 298.8 256.8 299.2 253.7 299.7 250.6 300.2 247.5 300.8 244.5 301.3 241.4 301.9 238.4 302.5 235.5 303.2 232.7 303.8 229.9 304.6 227.2 305.3 224.7 306.1 222.4 307.0 220.2 308.0 218.2 309.1 216.5 310.3 215.0 311.6 213.8 313.1 212.9 314.8 212.5 316.6 212.5 318.7 212.9 321.1 213.9 323.7 215.5 326.5 217.7 329.6 220.6 333.0 224.3 336.6 228.9 340.4 234.3 344.3 240.6 348.2 247.8 352.1 255.8 355.9 264.5 359.3 273.8 362.4 283.6 364.9 293.6 366.8 303.5 368.1 313.3 368.7 322.7 368.7 331.4 368.2 339.4 367.3 346.7 365.9 353.1 364.3 358.6 362.5 363.3 360.5 367.2 358.5 370.3 356.5 372.8 354.5 374.5 352.4 375.7 350.5 376.4 348.5 376.5 346.7 376.3 344.8 375.7 343.0 374.7 341.3 373.4 339.5 371.9 337.8 370.1 336.1 368.2 334.4 366.0 332.7 363.8 331.0 361.4 329.3 358.9 327.6 356.4 325.9 353.7 324.2 351.1 322.5 348.3 320.9 345.6 319.2 342.9 317.5 340.1 315.9 337.3 314.3 334.6 312.7 331.9 311.2 329.1 309.7 326.4 308.3 323.7 306.9 321.1 305.6 318.4 304.4 315.8 303.2 313.1 302.2 310.5 301.2 307.9 300.3 305.2 299.5 302.6 298.9 300.0 298.3Z"/></g>
<path d="M317 63.5 L323 63.5 L336 284 L330 284 Z" fill="url(#rodV)"/>
<path d="M113 292 L331 279.5 L335 286.5 L113 298 Z" fill="url(#rodH)"/>
<circle cx="319.5" cy="63.8" r="1.3" fill="#8a2060"/>
<circle cx="113.5" cy="295" r="1.2" fill="#8a2060"/>
</svg></body></html>
